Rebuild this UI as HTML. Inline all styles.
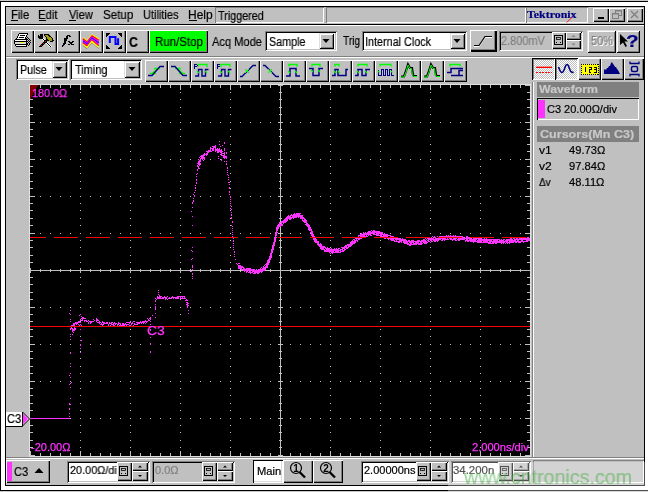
<!DOCTYPE html>
<html><head><meta charset="utf-8"><style>
html,body{margin:0;padding:0;width:648px;height:492px;overflow:hidden;background:#fff;position:relative}
div{box-sizing:border-box}
.t{position:absolute;font-family:"Liberation Sans", sans-serif;white-space:nowrap;line-height:1;will-change:transform;-webkit-text-stroke-width:0.2px}
.r{position:absolute;box-shadow:inset 1px 1px #fff,inset -1px -1px #000,inset -2px -2px #808080}
.r2{position:absolute;box-shadow:inset 1px 1px #dfdfdf,inset -1px -1px #000,inset 2px 2px #fff,inset -2px -2px #808080}
.rb{position:absolute;background:#c0c0c0;box-shadow:inset 1px 1px #fff,inset -2px -2px #000,inset -3px -3px #808080}
.s{position:absolute;box-shadow:inset 1px 1px #808080,inset -1px -1px #fff,inset 2px 2px #000,inset -2px -2px #c0c0c0}
.th{position:absolute;box-shadow:inset 1px 1px #808080,inset -1px -1px #fff}
.pd{position:absolute;background-color:#fff;background-image:repeating-conic-gradient(#c0c0c0 0 25%,#fff 0 50%);background-size:2px 2px;box-shadow:inset 1px 1px #000,inset -1px -1px #fff,inset 2px 2px #808080}
svg{display:block}
</style></head><body>
<div style="position:absolute;left:0px;top:0px;width:648px;height:1px;background:#c8c8c8"></div><div style="position:absolute;left:0px;top:1px;width:648px;height:1px;background:#000"></div><div style="position:absolute;left:0px;top:1px;width:1px;height:490px;background:#000"></div><div style="position:absolute;left:0px;top:490px;width:648px;height:1px;background:#000"></div><div style="position:absolute;left:0px;top:491px;width:648px;height:1px;background:#c8c8c8"></div><div style="position:absolute;left:5px;top:6px;width:640px;height:480px;background:#000"></div><div style="position:absolute;left:6px;top:7px;width:638px;height:478px;background:#c0c0c0"></div><div class="t" style="left:11.06px;top:9px;font-size:12px;color:#000;transform:scaleX(0.941);transform-origin:0 0;">File</div><div style="position:absolute;left:11px;top:20px;width:7px;height:1px;background:#000"></div><div class="t" style="left:38.05px;top:9px;font-size:12px;color:#000;transform:scaleX(0.947);transform-origin:0 0;">Edit</div><div style="position:absolute;left:39px;top:20px;width:7px;height:1px;background:#000"></div><div class="t" style="left:69.00px;top:9px;font-size:12px;color:#000;transform:scaleX(0.920);transform-origin:0 0;">View</div><div style="position:absolute;left:69px;top:20px;width:7px;height:1px;background:#000"></div><div class="t" style="left:103.03px;top:9px;font-size:12px;color:#000;transform:scaleX(0.966);transform-origin:0 0;">Setup</div><div class="t" style="left:143.08px;top:9px;font-size:12px;color:#000;transform:scaleX(0.917);transform-origin:0 0;">Utilities</div><div class="t" style="left:188.00px;top:9px;font-size:12px;color:#000;">Help</div><div style="position:absolute;left:189px;top:20px;width:8px;height:1px;background:#000"></div><div class="th" style="left:215px;top:7px;width:109px;height:16px;background:transparent"></div><div class="t" style="left:218.00px;top:10px;font-size:12px;color:#000;transform:scaleX(0.898);transform-origin:0 0;">Triggered</div><div class="th" style="left:326px;top:7px;width:200px;height:16px;background:transparent"></div><div class="th" style="left:526px;top:7px;width:62px;height:16px;background:transparent"></div><div class="t" style="left:527px;top:9px;font-family:'Liberation Serif',serif;font-weight:bold;font-size:11px;color:#000080;transform:scaleX(1.08);transform-origin:0 0;letter-spacing:0px">Tektronix</div><svg style="position:absolute;left:566px;top:17px;" width="8" height="6"><line x1="0.5" y1="5.5" x2="6" y2="0.5" stroke="#ff2020" stroke-width="1"/></svg><div class="r" style="left:593px;top:8px;width:16px;height:14px;background:#c0c0c0"></div><div style="position:absolute;left:598px;top:17px;width:6px;height:2px;background:#000"></div><div class="r" style="left:609px;top:8px;width:16px;height:14px;background:#c0c0c0"></div><svg style="position:absolute;left:609px;top:8px;" width="16" height="14"><rect x="6.5" y="2.5" width="6" height="5" fill="none" stroke="#808080"/><rect x="6.5" y="2.5" width="6" height="1" fill="#808080"/><rect x="3.5" y="5.5" width="6" height="5" fill="#c0c0c0" stroke="#808080"/><rect x="3.5" y="5.5" width="6" height="1" fill="#808080"/></svg><div class="r" style="left:627px;top:8px;width:16px;height:14px;background:#c0c0c0"></div><svg style="position:absolute;left:627px;top:8px;" width="16" height="14"><path d="M4 3 L11 10 M11 3 L4 10" stroke="#808080" stroke-width="1.4"/></svg><div style="position:absolute;left:6px;top:24px;width:638px;height:1px;background:#000"></div><div style="position:absolute;left:6px;top:25px;width:638px;height:1px;background:#fff"></div><div class="r" style="left:11px;top:30px;width:23px;height:23px;background:#c0c0c0"></div><div class="r" style="left:34px;top:30px;width:23px;height:23px;background:#c0c0c0"></div><div class="r" style="left:57px;top:30px;width:23px;height:23px;background:#c0c0c0"></div><div class="r" style="left:80px;top:30px;width:23px;height:23px;background:#c0c0c0"></div><div class="r" style="left:103px;top:30px;width:23px;height:23px;background:#c0c0c0"></div><div class="r" style="left:126px;top:30px;width:23px;height:23px;background:#c0c0c0"></div><svg style="position:absolute;left:11px;top:30px;shape-rendering:crispEdges" width="23" height="23"><path d="M8 3h1v1h-1zM9 3h1v1h-1zM10 3h1v1h-1zM11 3h1v1h-1zM12 3h1v1h-1zM13 3h1v1h-1zM14 3h1v1h-1zM15 3h1v1h-1zM16 3h1v1h-1zM7 4h1v1h-1zM16 4h1v1h-1zM7 5h1v1h-1zM9 5h1v1h-1zM10 5h1v1h-1zM11 5h1v1h-1zM12 5h1v1h-1zM13 5h1v1h-1zM15 5h1v1h-1zM6 6h1v1h-1zM15 6h1v1h-1zM6 7h1v1h-1zM8 7h1v1h-1zM9 7h1v1h-1zM10 7h1v1h-1zM11 7h1v1h-1zM12 7h1v1h-1zM14 7h1v1h-1zM16 7h1v1h-1zM5 8h1v1h-1zM14 8h1v1h-1zM15 8h1v1h-1zM17 8h1v1h-1zM4 9h1v1h-1zM5 9h1v1h-1zM6 9h1v1h-1zM7 9h1v1h-1zM8 9h1v1h-1zM9 9h1v1h-1zM10 9h1v1h-1zM11 9h1v1h-1zM12 9h1v1h-1zM13 9h1v1h-1zM14 9h1v1h-1zM15 9h1v1h-1zM16 9h1v1h-1zM18 9h1v1h-1zM3 10h1v1h-1zM15 10h1v1h-1zM17 10h1v1h-1zM19 10h1v1h-1zM3 11h1v1h-1zM4 11h1v1h-1zM5 11h1v1h-1zM6 11h1v1h-1zM7 11h1v1h-1zM8 11h1v1h-1zM9 11h1v1h-1zM10 11h1v1h-1zM11 11h1v1h-1zM12 11h1v1h-1zM13 11h1v1h-1zM14 11h1v1h-1zM15 11h1v1h-1zM16 11h1v1h-1zM18 11h1v1h-1zM3 12h1v1h-1zM15 12h1v1h-1zM17 12h1v1h-1zM19 12h1v1h-1zM3 13h1v1h-1zM15 13h1v1h-1zM16 13h1v1h-1zM18 13h1v1h-1zM4 14h1v1h-1zM5 14h1v1h-1zM6 14h1v1h-1zM7 14h1v1h-1zM8 14h1v1h-1zM9 14h1v1h-1zM10 14h1v1h-1zM11 14h1v1h-1zM12 14h1v1h-1zM13 14h1v1h-1zM14 14h1v1h-1zM15 14h1v1h-1zM16 14h1v1h-1zM18 14h1v1h-1zM4 15h1v1h-1zM15 15h1v1h-1zM17 15h1v1h-1zM5 16h1v1h-1zM6 16h1v1h-1zM7 16h1v1h-1zM8 16h1v1h-1zM9 16h1v1h-1zM10 16h1v1h-1zM11 16h1v1h-1zM12 16h1v1h-1zM13 16h1v1h-1zM14 16h1v1h-1zM15 16h1v1h-1z" fill="#000"/><path d="M8 4h1v1h-1zM9 4h1v1h-1zM10 4h1v1h-1zM11 4h1v1h-1zM12 4h1v1h-1zM13 4h1v1h-1zM14 4h1v1h-1zM15 4h1v1h-1zM8 5h1v1h-1zM14 5h1v1h-1zM7 6h1v1h-1zM8 6h1v1h-1zM9 6h1v1h-1zM10 6h1v1h-1zM11 6h1v1h-1zM12 6h1v1h-1zM13 6h1v1h-1zM14 6h1v1h-1zM7 7h1v1h-1zM13 7h1v1h-1zM6 8h1v1h-1zM7 8h1v1h-1zM8 8h1v1h-1zM9 8h1v1h-1zM10 8h1v1h-1zM11 8h1v1h-1zM12 8h1v1h-1zM13 8h1v1h-1zM4 10h1v1h-1zM5 10h1v1h-1zM6 10h1v1h-1zM7 10h1v1h-1zM8 10h1v1h-1zM9 10h1v1h-1zM10 10h1v1h-1zM11 10h1v1h-1zM12 10h1v1h-1zM13 10h1v1h-1zM14 10h1v1h-1zM5 15h1v1h-1zM6 15h1v1h-1zM7 15h1v1h-1zM8 15h1v1h-1zM9 15h1v1h-1zM10 15h1v1h-1zM11 15h1v1h-1zM12 15h1v1h-1zM13 15h1v1h-1zM14 15h1v1h-1z" fill="#fff"/><path d="M4 12h1v1h-1zM5 12h1v1h-1zM6 12h1v1h-1zM7 12h1v1h-1zM8 12h1v1h-1zM13 12h1v1h-1zM14 12h1v1h-1zM4 13h1v1h-1zM5 13h1v1h-1zM6 13h1v1h-1zM7 13h1v1h-1zM8 13h1v1h-1zM9 13h1v1h-1zM10 13h1v1h-1zM11 13h1v1h-1zM12 13h1v1h-1zM13 13h1v1h-1zM14 13h1v1h-1z" fill="#dcdcdc"/><path d="M9 12h1v1h-1zM10 12h1v1h-1zM11 12h1v1h-1zM12 12h1v1h-1z" fill="#ffff00"/></svg><svg style="position:absolute;left:34px;top:30px;shape-rendering:crispEdges" width="23" height="23"><path d="M6 4h1v1h-1zM7 4h1v1h-1zM8 4h1v1h-1zM4 5h1v1h-1zM6 5h1v1h-1zM7 5h1v1h-1zM8 5h1v1h-1zM4 6h1v1h-1zM5 6h1v1h-1zM6 6h1v1h-1zM7 6h1v1h-1zM8 6h1v1h-1zM4 7h1v1h-1zM5 7h1v1h-1zM6 7h1v1h-1zM7 7h1v1h-1zM8 7h1v1h-1zM5 8h1v1h-1zM6 8h1v1h-1zM7 8h1v1h-1zM8 8h1v1h-1zM9 9h1v1h-1zM10 10h1v1h-1zM11 10h1v1h-1zM10 11h1v1h-1zM12 11h1v1h-1zM11 12h1v1h-1zM12 12h1v1h-1zM13 13h1v1h-1zM14 14h1v1h-1zM15 15h1v1h-1zM16 16h1v1h-1zM12 9h1v1h-1zM13 9h1v1h-1zM12 10h1v1h-1zM13 10h1v1h-1zM9 12h1v1h-1zM10 12h1v1h-1zM8 13h1v1h-1zM10 13h1v1h-1zM7 14h1v1h-1zM8 14h1v1h-1zM9 14h1v1h-1zM6 15h1v1h-1zM8 15h1v1h-1zM5 16h1v1h-1zM6 16h1v1h-1zM7 16h1v1h-1zM10 4h1v1h-1zM11 4h1v1h-1zM12 4h1v1h-1zM13 4h1v1h-1zM14 4h1v1h-1zM10 5h1v1h-1zM14 5h1v1h-1zM15 5h1v1h-1zM11 6h1v1h-1zM15 6h1v1h-1zM16 6h1v1h-1zM12 7h1v1h-1zM17 7h1v1h-1zM12 8h1v1h-1zM18 8h1v1h-1zM18 9h1v1h-1zM14 10h1v1h-1zM18 10h1v1h-1zM19 10h1v1h-1zM16 11h1v1h-1zM17 11h1v1h-1zM18 11h1v1h-1z" fill="#000"/><path d="M9 8h1v1h-1zM8 9h1v1h-1zM10 9h1v1h-1zM9 10h1v1h-1zM13 12h1v1h-1zM12 13h1v1h-1zM14 13h1v1h-1zM13 14h1v1h-1zM15 14h1v1h-1zM14 15h1v1h-1zM16 15h1v1h-1zM15 16h1v1h-1zM17 16h1v1h-1z" fill="#fff"/><path d="M11 11h1v1h-1zM9 13h1v1h-1zM7 15h1v1h-1z" fill="#e00000"/><path d="M14 9h1v1h-1zM11 5h1v1h-1zM12 5h1v1h-1zM13 5h1v1h-1zM12 6h1v1h-1zM13 6h1v1h-1zM14 6h1v1h-1zM13 7h1v1h-1zM14 7h1v1h-1zM15 7h1v1h-1zM16 7h1v1h-1zM13 8h1v1h-1zM14 8h1v1h-1zM15 8h1v1h-1zM16 8h1v1h-1zM17 8h1v1h-1zM15 9h1v1h-1zM16 9h1v1h-1zM17 9h1v1h-1zM15 10h1v1h-1zM16 10h1v1h-1zM17 10h1v1h-1z" fill="#a0a000"/></svg><svg style="position:absolute;left:57px;top:30px;shape-rendering:crispEdges" width="23" height="23"><path d="M10 5h1v1h-1zM11 5h1v1h-1zM12 5h1v1h-1zM9 6h1v1h-1zM10 6h1v1h-1zM12 6h1v1h-1zM13 6h1v1h-1zM9 7h1v1h-1zM10 7h1v1h-1zM7 8h1v1h-1zM8 8h1v1h-1zM9 8h1v1h-1zM10 8h1v1h-1zM7 9h1v1h-1zM8 9h1v1h-1zM9 9h1v1h-1zM7 10h1v1h-1zM8 10h1v1h-1zM9 10h1v1h-1zM7 11h1v1h-1zM8 11h1v1h-1zM11 11h1v1h-1zM12 11h1v1h-1zM15 11h1v1h-1zM16 11h1v1h-1zM7 12h1v1h-1zM8 12h1v1h-1zM12 12h1v1h-1zM13 12h1v1h-1zM14 12h1v1h-1zM15 12h1v1h-1zM6 13h1v1h-1zM7 13h1v1h-1zM8 13h1v1h-1zM13 13h1v1h-1zM14 13h1v1h-1zM6 14h1v1h-1zM7 14h1v1h-1zM11 14h1v1h-1zM12 14h1v1h-1zM14 14h1v1h-1zM15 14h1v1h-1zM16 14h1v1h-1zM5 15h1v1h-1zM6 15h1v1h-1zM5 16h1v1h-1z" fill="#000"/></svg><svg style="position:absolute;left:80px;top:30px;" width="23" height="23"><path d="M3 15.5 L7 18.6 L12 12.6 L18.5 18.4" fill="none" stroke="#808080" stroke-width="1"/><path d="M3.00 7.80 L7.00 11.00 L12.00 4.80 L18.80 9.00" fill="none" stroke="#ffff00" stroke-width="1.3"/><path d="M3.00 8.87 L7.00 12.07 L11.97 5.90 L18.77 10.37" fill="none" stroke="#ff0000" stroke-width="1.3"/><path d="M3.00 9.93 L7.00 13.13 L11.93 7.00 L18.73 11.73" fill="none" stroke="#ff00ff" stroke-width="1.3"/><path d="M3.00 11.00 L7.00 14.20 L11.90 8.10 L18.70 13.10" fill="none" stroke="#0000ff" stroke-width="1.3"/><path d="M3.00 12.07 L7.00 15.27 L11.87 9.20 L18.67 14.47" fill="none" stroke="#ff00ff" stroke-width="1.3"/><path d="M3.00 13.13 L7.00 16.33 L11.83 10.30 L18.63 15.83" fill="none" stroke="#ff0000" stroke-width="1.3"/><path d="M3.00 14.20 L7.00 17.40 L11.80 11.40 L18.60 17.20" fill="none" stroke="#ffff00" stroke-width="1.3"/></svg><svg style="position:absolute;left:103px;top:30px;" width="23" height="23">
<path d="M3 3h4v1h-1v1h-1v1h-1v1h-1z M19 3h-4v1h1v1h1v1h1v1h1z M3 19h4v-1h-1v-1h-1v-1h-1v-1h-1z M19 19h-4v-1h1v-1h1v-1h1v-1h1z" fill="#000"/>
<path d="M6.8 13 V7.1 H12.5 V14 H15.1 V8.2" fill="none" stroke="#0000ff" stroke-width="2"/>
</svg><div class="t" style="left:129.12px;top:35px;font-size:14px;color:#000;font-weight:bold;transform:scaleX(0.875);transform-origin:0 0;">C</div><div class="r" style="left:149px;top:30px;width:59px;height:23px;background:#00ff00"></div><div class="t" style="left:155.04px;top:36px;font-size:12px;color:#000;transform:scaleX(0.958);transform-origin:0 0;">Run/Stop</div><div class="t" style="left:212.00px;top:36px;font-size:12px;color:#000;transform:scaleX(0.925);transform-origin:0 0;">Acq Mode</div><div class="s" style="left:265px;top:31px;width:72px;height:20px;background:#fff"></div><div class="r2" style="left:319px;top:33px;width:15px;height:16px;background:#c0c0c0"></div><svg style="position:absolute;left:319px;top:33px;" width="15" height="16"><path d="M3.5 6 h7 l-3.5 4 z" fill="#000"/></svg><div class="t" style="left:269.11px;top:36px;font-size:12px;color:#000;transform:scaleX(0.895);transform-origin:0 0;">Sample</div><div class="t" style="left:343.00px;top:35px;font-size:12px;color:#000;transform:scaleX(0.842);transform-origin:0 0;">Trig</div><div class="s" style="left:362px;top:31px;width:105px;height:20px;background:#fff"></div><div class="r2" style="left:450px;top:33px;width:15px;height:16px;background:#c0c0c0"></div><svg style="position:absolute;left:450px;top:33px;" width="15" height="16"><path d="M3.5 6 h7 l-3.5 4 z" fill="#000"/></svg><div class="t" style="left:365.10px;top:36px;font-size:12px;color:#000;transform:scaleX(0.901);transform-origin:0 0;">Internal Clock</div><div class="rb" style="left:470px;top:30px;width:27px;height:22px"></div><svg style="position:absolute;left:470px;top:30px;" width="27" height="22"><path d="M4 16.5 H9 L15 7.5 H22" fill="none" stroke="#fff" stroke-width="1"/><path d="M4 15.5 H9 L15 6.5 H22" fill="none" stroke="#000" stroke-width="1.2"/></svg><div class="s" style="left:499px;top:31px;width:84px;height:20px;background:#c0c0c0"></div><div class="t" style="left:501.09px;top:35px;font-size:12px;color:#808080;transform:scaleX(0.913);transform-origin:0 0;">2.800mV</div><div class="r" style="left:552px;top:32px;width:14px;height:17px;background:#c0c0c0"></div><svg style="position:absolute;left:552px;top:32px;" width="14" height="17"><rect x="2.5" y="3.5" width="8" height="9" fill="none" stroke="#000"/><rect x="4.5" y="5.5" width="4" height="2" fill="none" stroke="#000" stroke-width="0.8"/><rect x="4" y="10" width="1" height="1" fill="#000"/><rect x="8" y="10" width="1" height="1" fill="#000"/></svg><div class="r" style="left:566px;top:32px;width:15px;height:8px;background:#c0c0c0"></div><div class="r" style="left:566px;top:40px;width:15px;height:9px;background:#c0c0c0"></div><svg style="position:absolute;left:566px;top:32px;" width="15" height="17"><path d="M5.5 5.0 h4 l-2 -2 z M5.5 11.5 h4 l-2 2 z" fill="#808080"/></svg><div class="r2" style="left:587px;top:30px;width:29px;height:23px;background:#c0c0c0"></div><div class="t" style="left:592.09px;top:36px;font-size:12px;color:#fff;transform:scaleX(0.909);transform-origin:0 0;">50%</div><div class="t" style="left:591.09px;top:35px;font-size:12px;color:#808080;transform:scaleX(0.909);transform-origin:0 0;">50%</div><div class="r2" style="left:616px;top:30px;width:24px;height:23px;background:#c0c0c0"></div><svg style="position:absolute;left:616px;top:30px;" width="24" height="23"><path d="M4 4 L4 15 L7 12.5 L9.5 17 L11 16 L8.5 11.5 L12 11.5 Z" fill="#000"/></svg><div class="t" style="left:625.71px;top:34px;font-size:16px;color:#000080;font-weight:bold;transform:scaleX(1.286);transform-origin:0 0;">?</div><div style="position:absolute;left:6px;top:56px;width:638px;height:1px;background:#808080"></div><div style="position:absolute;left:6px;top:57px;width:638px;height:1px;background:#fff"></div><div class="s" style="left:16px;top:59px;width:53px;height:21px;background:#fff"></div><div class="r2" style="left:52px;top:61px;width:15px;height:17px;background:#c0c0c0"></div><svg style="position:absolute;left:52px;top:61px;" width="15" height="17"><path d="M3.5 6 h7 l-3.5 4 z" fill="#000"/></svg><div class="t" style="left:20.11px;top:64px;font-size:12px;color:#000;transform:scaleX(0.893);transform-origin:0 0;">Pulse</div><div class="s" style="left:70px;top:59px;width:72px;height:21px;background:#fff"></div><div class="r2" style="left:124px;top:61px;width:16px;height:17px;background:#c0c0c0"></div><svg style="position:absolute;left:124px;top:61px;" width="16" height="17"><path d="M4.5 6 h7 l-3.5 4 z" fill="#000"/></svg><div class="t" style="left:75.00px;top:64px;font-size:12px;color:#000;transform:scaleX(0.912);transform-origin:0 0;">Timing</div><div class="r" style="left:145px;top:60px;width:23px;height:22px;background:#c0c0c0"></div><svg style="position:absolute;left:145px;top:60px;" width="23" height="22"><path d="M9 8.5 H15 M5 13.5 H11 M13 8.5 L7 13.5" stroke="#00ff00" stroke-width="1.3" fill="none"/><path d="M3 15.5 H7 L15 6.5 H19" stroke="#000080" stroke-width="1.3" fill="none"/></svg><div class="r" style="left:168px;top:60px;width:23px;height:22px;background:#c0c0c0"></div><svg style="position:absolute;left:168px;top:60px;" width="23" height="22"><path d="M7 8.5 H13 M11 13.5 H17 M9 8.5 L15 13.5" stroke="#00ff00" stroke-width="1.3" fill="none"/><path d="M3 6.5 H7 L15 15.5 H19" stroke="#000080" stroke-width="1.3" fill="none"/></svg><div class="r" style="left:191px;top:60px;width:23px;height:22px;background:#c0c0c0"></div><svg style="position:absolute;left:191px;top:60px;" width="23" height="22"><path d="M7 7 V4.5 H16 V7" stroke="#00ff00" stroke-width="1.3" fill="none"/><path d="M4 16 H7.5 V9.5 H11 V16 H14.5 V9.5 H17.5" stroke="#000080" stroke-width="1.4" fill="none"/><path d="M3 4h3v1h-2v1h2v-1h1v1h-1v1h-2v2h-1z" fill="#000080" shape-rendering="crispEdges"/><path d="M6 11 l2 2 M14 11 l2 2" stroke="#00ff00" stroke-width="1.3"/></svg><div class="r" style="left:214px;top:60px;width:23px;height:22px;background:#c0c0c0"></div><svg style="position:absolute;left:214px;top:60px;" width="23" height="22"><path d="M7 7 V4.5 H16 V7" stroke="#00ff00" stroke-width="1.3" fill="none"/><path d="M4 16 H7.5 V9.5 H11 V16 H14.5 V9.5 H17.5" stroke="#000080" stroke-width="1.4" fill="none"/><path d="M3 4h3v1h-2v1h2v1h-2v2h-1z" fill="#000080" shape-rendering="crispEdges"/><path d="M6 11 l2 2 M14 11 l2 2" stroke="#00ff00" stroke-width="1.3"/></svg><div class="r" style="left:237px;top:60px;width:23px;height:22px;background:#c0c0c0"></div><svg style="position:absolute;left:237px;top:60px;" width="23" height="22"><path d="M3 16.5 H5 L16 5.5 H19" stroke="#000080" stroke-width="1.3" fill="none"/><path d="M8 9 L12 13 M12 9 L8 13" stroke="#00ff00" stroke-width="1"/></svg><div class="r" style="left:260px;top:60px;width:23px;height:22px;background:#c0c0c0"></div><svg style="position:absolute;left:260px;top:60px;" width="23" height="22"><path d="M3 5.5 H5 L16 16.5 H19" stroke="#000080" stroke-width="1.3" fill="none"/><path d="M8 9 L12 13 M12 9 L8 13" stroke="#00ff00" stroke-width="1"/></svg><div class="r" style="left:283px;top:60px;width:23px;height:22px;background:#c0c0c0"></div><svg style="position:absolute;left:283px;top:60px;" width="23" height="22"><path d="M6 6.5 V4.5 H14 V6.5" stroke="#00ff00" stroke-width="1.5" fill="none"/><path d="M3 16 H7 V8.5 H13 V16 H17" stroke="#000080" stroke-width="1.5" fill="none"/><path d="M5 11 l2 2 M12 11 l2 2" stroke="#00ff00" stroke-width="1.3"/></svg><div class="r" style="left:306px;top:60px;width:23px;height:22px;background:#c0c0c0"></div><svg style="position:absolute;left:306px;top:60px;" width="23" height="22"><path d="M6 6.5 V4.5 H14 V6.5" stroke="#00ff00" stroke-width="1.5" fill="none"/><path d="M3 8.5 H7 V15.5 H13 V8.5 H17" stroke="#000080" stroke-width="1.5" fill="none"/><path d="M5 10 l2 2 M12 10 l2 2" stroke="#00ff00" stroke-width="1.3"/></svg><div class="r" style="left:329px;top:60px;width:23px;height:22px;background:#c0c0c0"></div><svg style="position:absolute;left:329px;top:60px;" width="23" height="22"><path d="M6 6.5 V4.5 H10 V6.5" stroke="#00ff00" stroke-width="1.5" fill="none"/><path d="M3 15.5 H6 V9.5 H9 V15.5 H17 V9.5 H19" stroke="#000080" stroke-width="1.5" fill="none"/><path d="M5 11 l2 2 M9 11 l2 2" stroke="#00ff00" stroke-width="1.3"/></svg><div class="r" style="left:352px;top:60px;width:23px;height:22px;background:#c0c0c0"></div><svg style="position:absolute;left:352px;top:60px;" width="23" height="22"><path d="M6 6.5 V4.5 H15 V6.5" stroke="#00ff00" stroke-width="1.5" fill="none"/><path d="M3 15.5 H6 V9.5 H10 V15.5 H14 V9.5 H18" stroke="#000080" stroke-width="1.5" fill="none"/><path d="M5 11 l2 2 M13 11 l2 2" stroke="#00ff00" stroke-width="1.3"/></svg><div class="r" style="left:375px;top:60px;width:23px;height:22px;background:#c0c0c0"></div><svg style="position:absolute;left:375px;top:60px;" width="23" height="22"><path d="M5 6.5 V4.5 H16 V6.5" stroke="#00ff00" stroke-width="1.3" fill="none"/><path d="M3.5 9.5 V15.5 H6.5 V9.5 H8.5 V15.5 H10.5 V9.5 H12.5 V15.5 H14.5 V9.5 H16.5 V15.5 H19" stroke="#000080" stroke-width="1" fill="none" shape-rendering="crispEdges"/><path d="M3 11 l1.5 1.5 M16 11 l1.5 1.5" stroke="#00ff00" stroke-width="1.2"/></svg><div class="r" style="left:398px;top:60px;width:23px;height:22px;background:#c0c0c0"></div><svg style="position:absolute;left:398px;top:60px;" width="23" height="22"><path d="M3 16.5 H6 L8 11 L10 4.5 L12 8 H14 L15 15 L16 16 H19" stroke="#000" stroke-width="2.2" fill="none"/><path d="M3 17 H6 L8 12 L10 5 L12 8.5 H13.5 L14.5 15.5 L16 16.5 H19" stroke="#00ff00" stroke-width="1" fill="none"/></svg><div class="r" style="left:421px;top:60px;width:23px;height:22px;background:#c0c0c0"></div><svg style="position:absolute;left:421px;top:60px;" width="23" height="22"><path d="M3 16.5 H6 L8 11 L10 4.5 L12 8 H14 L15 15 L16 16 H19" stroke="#000" stroke-width="2.2" fill="none"/><path d="M3 17 H6 L8 12 L10 5 L12 8.5 H13.5 L14.5 15.5 L16 16.5 H19" stroke="#00ff00" stroke-width="1" fill="none"/></svg><div class="r" style="left:444px;top:60px;width:23px;height:22px;background:#c0c0c0"></div><svg style="position:absolute;left:444px;top:60px;" width="23" height="22"><path d="M6 6.5 V4.5 H16 V6.5" stroke="#00ff00" stroke-width="1.5" fill="none"/><path d="M3 12.5 H7 V8.5 H19 M7 15.5 H19 M15 15.5 V10.5 H19" stroke="#000080" stroke-width="1.5" fill="none"/></svg><div class="pd" style="left:532px;top:58px;width:23px;height:22px"></div><div class="pd" style="left:555px;top:58px;width:23px;height:22px"></div><svg style="position:absolute;left:532px;top:58px;shape-rendering:crispEdges" width="23" height="22"><rect x="4" y="9" width="16" height="1" fill="#ff0000"/><rect x="4" y="8" width="16" height="1" fill="#ff0000" opacity="0.35"/><path d="M4 14.5 H20" stroke="#ff0000" stroke-width="1" stroke-dasharray="2 1"/></svg><svg style="position:absolute;left:555px;top:58px;" width="23" height="22"><path d="M3.5 9 Q5.5 14.5 7 14.5 Q8.5 14.5 10.5 8 Q12 5 13.5 8 Q15.5 14.5 17.5 14.5 L18.5 14" fill="none" stroke="#000080" stroke-width="1.6"/></svg><div class="r" style="left:578px;top:58px;width:23px;height:22px;background:#c0c0c0"></div><svg style="position:absolute;left:578px;top:58px;shape-rendering:crispEdges" width="23" height="22"><rect x="3" y="6" width="18" height="11" fill="#ffff00"/><path d="M3 6.5 H21 M3 16.5 H21" stroke="#000" stroke-width="1" stroke-dasharray="1 1"/><path d="M3.5 6 V17 M20.5 6 V17" stroke="#000" stroke-width="1" stroke-dasharray="1 1"/><path d="M7.5 9 V14 M11 9 h2 v2 h-2 v3 h2 M16 9 h2 v5 h-2 M16 11.5 h2" fill="none" stroke="#000" stroke-width="1"/></svg><div class="r" style="left:601px;top:58px;width:23px;height:22px;background:#c0c0c0"></div><svg style="position:absolute;left:601px;top:58px;" width="23" height="22"><path d="M3 16 V12 L4 11 L5 12 L6 10 L7 10 L8 8 L9 8 L10 5 L11 4 L12 6 L13 7 L14 9 L15 9 L16 11 L17 12 L18 14 L19 16 Z" fill="#000080"/></svg><div class="r" style="left:624px;top:58px;width:20px;height:22px;background:#c0c0c0"></div><svg style="position:absolute;left:624px;top:58px;" width="20" height="22"><path d="M6 3.5 V5.5 H15 V3.5 M6 18.5 V16.5 H15 V18.5" stroke="#000080" stroke-width="1.3" fill="none"/><rect x="7.5" y="8.5" width="6" height="5" rx="1.5" fill="none" stroke="#000080" stroke-width="1.5"/></svg><div style="position:absolute;left:29px;top:84px;width:502px;height:373px;background:#e0e0e0"></div><svg style="position:absolute;left:30px;top:85px" width="500" height="371" shape-rendering="crispEdges"><rect width="500" height="371" fill="#000"/><path d="M50 0h1v1h-1zM50 7h1v1h-1zM50 14h1v1h-1zM50 22h1v1h-1zM50 29h1v1h-1zM50 37h1v1h-1zM50 44h1v1h-1zM50 51h1v1h-1zM50 59h1v1h-1zM50 66h1v1h-1zM50 74h1v1h-1zM50 81h1v1h-1zM50 88h1v1h-1zM50 96h1v1h-1zM50 103h1v1h-1zM50 111h1v1h-1zM50 118h1v1h-1zM50 125h1v1h-1zM50 133h1v1h-1zM50 140h1v1h-1zM50 148h1v1h-1zM50 155h1v1h-1zM50 162h1v1h-1zM50 170h1v1h-1zM50 177h1v1h-1zM50 185h1v1h-1zM50 192h1v1h-1zM50 199h1v1h-1zM50 207h1v1h-1zM50 214h1v1h-1zM50 222h1v1h-1zM50 229h1v1h-1zM50 236h1v1h-1zM50 244h1v1h-1zM50 251h1v1h-1zM50 259h1v1h-1zM50 266h1v1h-1zM50 273h1v1h-1zM50 281h1v1h-1zM50 288h1v1h-1zM50 296h1v1h-1zM50 303h1v1h-1zM50 310h1v1h-1zM50 318h1v1h-1zM50 325h1v1h-1zM50 333h1v1h-1zM50 340h1v1h-1zM50 347h1v1h-1zM50 355h1v1h-1zM50 362h1v1h-1zM50 370h1v1h-1zM100 0h1v1h-1zM100 7h1v1h-1zM100 14h1v1h-1zM100 22h1v1h-1zM100 29h1v1h-1zM100 37h1v1h-1zM100 44h1v1h-1zM100 51h1v1h-1zM100 59h1v1h-1zM100 66h1v1h-1zM100 74h1v1h-1zM100 81h1v1h-1zM100 88h1v1h-1zM100 96h1v1h-1zM100 103h1v1h-1zM100 111h1v1h-1zM100 118h1v1h-1zM100 125h1v1h-1zM100 133h1v1h-1zM100 140h1v1h-1zM100 148h1v1h-1zM100 155h1v1h-1zM100 162h1v1h-1zM100 170h1v1h-1zM100 177h1v1h-1zM100 185h1v1h-1zM100 192h1v1h-1zM100 199h1v1h-1zM100 207h1v1h-1zM100 214h1v1h-1zM100 222h1v1h-1zM100 229h1v1h-1zM100 236h1v1h-1zM100 244h1v1h-1zM100 251h1v1h-1zM100 259h1v1h-1zM100 266h1v1h-1zM100 273h1v1h-1zM100 281h1v1h-1zM100 288h1v1h-1zM100 296h1v1h-1zM100 303h1v1h-1zM100 310h1v1h-1zM100 318h1v1h-1zM100 325h1v1h-1zM100 333h1v1h-1zM100 340h1v1h-1zM100 347h1v1h-1zM100 355h1v1h-1zM100 362h1v1h-1zM100 370h1v1h-1zM150 0h1v1h-1zM150 7h1v1h-1zM150 14h1v1h-1zM150 22h1v1h-1zM150 29h1v1h-1zM150 37h1v1h-1zM150 44h1v1h-1zM150 51h1v1h-1zM150 59h1v1h-1zM150 66h1v1h-1zM150 74h1v1h-1zM150 81h1v1h-1zM150 88h1v1h-1zM150 96h1v1h-1zM150 103h1v1h-1zM150 111h1v1h-1zM150 118h1v1h-1zM150 125h1v1h-1zM150 133h1v1h-1zM150 140h1v1h-1zM150 148h1v1h-1zM150 155h1v1h-1zM150 162h1v1h-1zM150 170h1v1h-1zM150 177h1v1h-1zM150 185h1v1h-1zM150 192h1v1h-1zM150 199h1v1h-1zM150 207h1v1h-1zM150 214h1v1h-1zM150 222h1v1h-1zM150 229h1v1h-1zM150 236h1v1h-1zM150 244h1v1h-1zM150 251h1v1h-1zM150 259h1v1h-1zM150 266h1v1h-1zM150 273h1v1h-1zM150 281h1v1h-1zM150 288h1v1h-1zM150 296h1v1h-1zM150 303h1v1h-1zM150 310h1v1h-1zM150 318h1v1h-1zM150 325h1v1h-1zM150 333h1v1h-1zM150 340h1v1h-1zM150 347h1v1h-1zM150 355h1v1h-1zM150 362h1v1h-1zM150 370h1v1h-1zM200 0h1v1h-1zM200 7h1v1h-1zM200 14h1v1h-1zM200 22h1v1h-1zM200 29h1v1h-1zM200 37h1v1h-1zM200 44h1v1h-1zM200 51h1v1h-1zM200 59h1v1h-1zM200 66h1v1h-1zM200 74h1v1h-1zM200 81h1v1h-1zM200 88h1v1h-1zM200 96h1v1h-1zM200 103h1v1h-1zM200 111h1v1h-1zM200 118h1v1h-1zM200 125h1v1h-1zM200 133h1v1h-1zM200 140h1v1h-1zM200 148h1v1h-1zM200 155h1v1h-1zM200 162h1v1h-1zM200 170h1v1h-1zM200 177h1v1h-1zM200 185h1v1h-1zM200 192h1v1h-1zM200 199h1v1h-1zM200 207h1v1h-1zM200 214h1v1h-1zM200 222h1v1h-1zM200 229h1v1h-1zM200 236h1v1h-1zM200 244h1v1h-1zM200 251h1v1h-1zM200 259h1v1h-1zM200 266h1v1h-1zM200 273h1v1h-1zM200 281h1v1h-1zM200 288h1v1h-1zM200 296h1v1h-1zM200 303h1v1h-1zM200 310h1v1h-1zM200 318h1v1h-1zM200 325h1v1h-1zM200 333h1v1h-1zM200 340h1v1h-1zM200 347h1v1h-1zM200 355h1v1h-1zM200 362h1v1h-1zM200 370h1v1h-1zM300 0h1v1h-1zM300 7h1v1h-1zM300 14h1v1h-1zM300 22h1v1h-1zM300 29h1v1h-1zM300 37h1v1h-1zM300 44h1v1h-1zM300 51h1v1h-1zM300 59h1v1h-1zM300 66h1v1h-1zM300 74h1v1h-1zM300 81h1v1h-1zM300 88h1v1h-1zM300 96h1v1h-1zM300 103h1v1h-1zM300 111h1v1h-1zM300 118h1v1h-1zM300 125h1v1h-1zM300 133h1v1h-1zM300 140h1v1h-1zM300 148h1v1h-1zM300 155h1v1h-1zM300 162h1v1h-1zM300 170h1v1h-1zM300 177h1v1h-1zM300 185h1v1h-1zM300 192h1v1h-1zM300 199h1v1h-1zM300 207h1v1h-1zM300 214h1v1h-1zM300 222h1v1h-1zM300 229h1v1h-1zM300 236h1v1h-1zM300 244h1v1h-1zM300 251h1v1h-1zM300 259h1v1h-1zM300 266h1v1h-1zM300 273h1v1h-1zM300 281h1v1h-1zM300 288h1v1h-1zM300 296h1v1h-1zM300 303h1v1h-1zM300 310h1v1h-1zM300 318h1v1h-1zM300 325h1v1h-1zM300 333h1v1h-1zM300 340h1v1h-1zM300 347h1v1h-1zM300 355h1v1h-1zM300 362h1v1h-1zM300 370h1v1h-1zM350 0h1v1h-1zM350 7h1v1h-1zM350 14h1v1h-1zM350 22h1v1h-1zM350 29h1v1h-1zM350 37h1v1h-1zM350 44h1v1h-1zM350 51h1v1h-1zM350 59h1v1h-1zM350 66h1v1h-1zM350 74h1v1h-1zM350 81h1v1h-1zM350 88h1v1h-1zM350 96h1v1h-1zM350 103h1v1h-1zM350 111h1v1h-1zM350 118h1v1h-1zM350 125h1v1h-1zM350 133h1v1h-1zM350 140h1v1h-1zM350 148h1v1h-1zM350 155h1v1h-1zM350 162h1v1h-1zM350 170h1v1h-1zM350 177h1v1h-1zM350 185h1v1h-1zM350 192h1v1h-1zM350 199h1v1h-1zM350 207h1v1h-1zM350 214h1v1h-1zM350 222h1v1h-1zM350 229h1v1h-1zM350 236h1v1h-1zM350 244h1v1h-1zM350 251h1v1h-1zM350 259h1v1h-1zM350 266h1v1h-1zM350 273h1v1h-1zM350 281h1v1h-1zM350 288h1v1h-1zM350 296h1v1h-1zM350 303h1v1h-1zM350 310h1v1h-1zM350 318h1v1h-1zM350 325h1v1h-1zM350 333h1v1h-1zM350 340h1v1h-1zM350 347h1v1h-1zM350 355h1v1h-1zM350 362h1v1h-1zM350 370h1v1h-1zM400 0h1v1h-1zM400 7h1v1h-1zM400 14h1v1h-1zM400 22h1v1h-1zM400 29h1v1h-1zM400 37h1v1h-1zM400 44h1v1h-1zM400 51h1v1h-1zM400 59h1v1h-1zM400 66h1v1h-1zM400 74h1v1h-1zM400 81h1v1h-1zM400 88h1v1h-1zM400 96h1v1h-1zM400 103h1v1h-1zM400 111h1v1h-1zM400 118h1v1h-1zM400 125h1v1h-1zM400 133h1v1h-1zM400 140h1v1h-1zM400 148h1v1h-1zM400 155h1v1h-1zM400 162h1v1h-1zM400 170h1v1h-1zM400 177h1v1h-1zM400 185h1v1h-1zM400 192h1v1h-1zM400 199h1v1h-1zM400 207h1v1h-1zM400 214h1v1h-1zM400 222h1v1h-1zM400 229h1v1h-1zM400 236h1v1h-1zM400 244h1v1h-1zM400 251h1v1h-1zM400 259h1v1h-1zM400 266h1v1h-1zM400 273h1v1h-1zM400 281h1v1h-1zM400 288h1v1h-1zM400 296h1v1h-1zM400 303h1v1h-1zM400 310h1v1h-1zM400 318h1v1h-1zM400 325h1v1h-1zM400 333h1v1h-1zM400 340h1v1h-1zM400 347h1v1h-1zM400 355h1v1h-1zM400 362h1v1h-1zM400 370h1v1h-1zM450 0h1v1h-1zM450 7h1v1h-1zM450 14h1v1h-1zM450 22h1v1h-1zM450 29h1v1h-1zM450 37h1v1h-1zM450 44h1v1h-1zM450 51h1v1h-1zM450 59h1v1h-1zM450 66h1v1h-1zM450 74h1v1h-1zM450 81h1v1h-1zM450 88h1v1h-1zM450 96h1v1h-1zM450 103h1v1h-1zM450 111h1v1h-1zM450 118h1v1h-1zM450 125h1v1h-1zM450 133h1v1h-1zM450 140h1v1h-1zM450 148h1v1h-1zM450 155h1v1h-1zM450 162h1v1h-1zM450 170h1v1h-1zM450 177h1v1h-1zM450 185h1v1h-1zM450 192h1v1h-1zM450 199h1v1h-1zM450 207h1v1h-1zM450 214h1v1h-1zM450 222h1v1h-1zM450 229h1v1h-1zM450 236h1v1h-1zM450 244h1v1h-1zM450 251h1v1h-1zM450 259h1v1h-1zM450 266h1v1h-1zM450 273h1v1h-1zM450 281h1v1h-1zM450 288h1v1h-1zM450 296h1v1h-1zM450 303h1v1h-1zM450 310h1v1h-1zM450 318h1v1h-1zM450 325h1v1h-1zM450 333h1v1h-1zM450 340h1v1h-1zM450 347h1v1h-1zM450 355h1v1h-1zM450 362h1v1h-1zM450 370h1v1h-1zM0 37h1v1h-1zM10 37h1v1h-1zM20 37h1v1h-1zM30 37h1v1h-1zM40 37h1v1h-1zM50 37h1v1h-1zM60 37h1v1h-1zM70 37h1v1h-1zM80 37h1v1h-1zM90 37h1v1h-1zM100 37h1v1h-1zM110 37h1v1h-1zM120 37h1v1h-1zM130 37h1v1h-1zM140 37h1v1h-1zM150 37h1v1h-1zM160 37h1v1h-1zM170 37h1v1h-1zM180 37h1v1h-1zM190 37h1v1h-1zM200 37h1v1h-1zM210 37h1v1h-1zM220 37h1v1h-1zM230 37h1v1h-1zM240 37h1v1h-1zM250 37h1v1h-1zM260 37h1v1h-1zM270 37h1v1h-1zM280 37h1v1h-1zM290 37h1v1h-1zM300 37h1v1h-1zM310 37h1v1h-1zM320 37h1v1h-1zM330 37h1v1h-1zM340 37h1v1h-1zM350 37h1v1h-1zM360 37h1v1h-1zM370 37h1v1h-1zM380 37h1v1h-1zM390 37h1v1h-1zM400 37h1v1h-1zM410 37h1v1h-1zM420 37h1v1h-1zM430 37h1v1h-1zM440 37h1v1h-1zM450 37h1v1h-1zM460 37h1v1h-1zM470 37h1v1h-1zM480 37h1v1h-1zM490 37h1v1h-1zM500 37h1v1h-1zM0 74h1v1h-1zM10 74h1v1h-1zM20 74h1v1h-1zM30 74h1v1h-1zM40 74h1v1h-1zM50 74h1v1h-1zM60 74h1v1h-1zM70 74h1v1h-1zM80 74h1v1h-1zM90 74h1v1h-1zM100 74h1v1h-1zM110 74h1v1h-1zM120 74h1v1h-1zM130 74h1v1h-1zM140 74h1v1h-1zM150 74h1v1h-1zM160 74h1v1h-1zM170 74h1v1h-1zM180 74h1v1h-1zM190 74h1v1h-1zM200 74h1v1h-1zM210 74h1v1h-1zM220 74h1v1h-1zM230 74h1v1h-1zM240 74h1v1h-1zM250 74h1v1h-1zM260 74h1v1h-1zM270 74h1v1h-1zM280 74h1v1h-1zM290 74h1v1h-1zM300 74h1v1h-1zM310 74h1v1h-1zM320 74h1v1h-1zM330 74h1v1h-1zM340 74h1v1h-1zM350 74h1v1h-1zM360 74h1v1h-1zM370 74h1v1h-1zM380 74h1v1h-1zM390 74h1v1h-1zM400 74h1v1h-1zM410 74h1v1h-1zM420 74h1v1h-1zM430 74h1v1h-1zM440 74h1v1h-1zM450 74h1v1h-1zM460 74h1v1h-1zM470 74h1v1h-1zM480 74h1v1h-1zM490 74h1v1h-1zM500 74h1v1h-1zM0 111h1v1h-1zM10 111h1v1h-1zM20 111h1v1h-1zM30 111h1v1h-1zM40 111h1v1h-1zM50 111h1v1h-1zM60 111h1v1h-1zM70 111h1v1h-1zM80 111h1v1h-1zM90 111h1v1h-1zM100 111h1v1h-1zM110 111h1v1h-1zM120 111h1v1h-1zM130 111h1v1h-1zM140 111h1v1h-1zM150 111h1v1h-1zM160 111h1v1h-1zM170 111h1v1h-1zM180 111h1v1h-1zM190 111h1v1h-1zM200 111h1v1h-1zM210 111h1v1h-1zM220 111h1v1h-1zM230 111h1v1h-1zM240 111h1v1h-1zM250 111h1v1h-1zM260 111h1v1h-1zM270 111h1v1h-1zM280 111h1v1h-1zM290 111h1v1h-1zM300 111h1v1h-1zM310 111h1v1h-1zM320 111h1v1h-1zM330 111h1v1h-1zM340 111h1v1h-1zM350 111h1v1h-1zM360 111h1v1h-1zM370 111h1v1h-1zM380 111h1v1h-1zM390 111h1v1h-1zM400 111h1v1h-1zM410 111h1v1h-1zM420 111h1v1h-1zM430 111h1v1h-1zM440 111h1v1h-1zM450 111h1v1h-1zM460 111h1v1h-1zM470 111h1v1h-1zM480 111h1v1h-1zM490 111h1v1h-1zM500 111h1v1h-1zM0 148h1v1h-1zM10 148h1v1h-1zM20 148h1v1h-1zM30 148h1v1h-1zM40 148h1v1h-1zM50 148h1v1h-1zM60 148h1v1h-1zM70 148h1v1h-1zM80 148h1v1h-1zM90 148h1v1h-1zM100 148h1v1h-1zM110 148h1v1h-1zM120 148h1v1h-1zM130 148h1v1h-1zM140 148h1v1h-1zM150 148h1v1h-1zM160 148h1v1h-1zM170 148h1v1h-1zM180 148h1v1h-1zM190 148h1v1h-1zM200 148h1v1h-1zM210 148h1v1h-1zM220 148h1v1h-1zM230 148h1v1h-1zM240 148h1v1h-1zM250 148h1v1h-1zM260 148h1v1h-1zM270 148h1v1h-1zM280 148h1v1h-1zM290 148h1v1h-1zM300 148h1v1h-1zM310 148h1v1h-1zM320 148h1v1h-1zM330 148h1v1h-1zM340 148h1v1h-1zM350 148h1v1h-1zM360 148h1v1h-1zM370 148h1v1h-1zM380 148h1v1h-1zM390 148h1v1h-1zM400 148h1v1h-1zM410 148h1v1h-1zM420 148h1v1h-1zM430 148h1v1h-1zM440 148h1v1h-1zM450 148h1v1h-1zM460 148h1v1h-1zM470 148h1v1h-1zM480 148h1v1h-1zM490 148h1v1h-1zM500 148h1v1h-1zM0 222h1v1h-1zM10 222h1v1h-1zM20 222h1v1h-1zM30 222h1v1h-1zM40 222h1v1h-1zM50 222h1v1h-1zM60 222h1v1h-1zM70 222h1v1h-1zM80 222h1v1h-1zM90 222h1v1h-1zM100 222h1v1h-1zM110 222h1v1h-1zM120 222h1v1h-1zM130 222h1v1h-1zM140 222h1v1h-1zM150 222h1v1h-1zM160 222h1v1h-1zM170 222h1v1h-1zM180 222h1v1h-1zM190 222h1v1h-1zM200 222h1v1h-1zM210 222h1v1h-1zM220 222h1v1h-1zM230 222h1v1h-1zM240 222h1v1h-1zM250 222h1v1h-1zM260 222h1v1h-1zM270 222h1v1h-1zM280 222h1v1h-1zM290 222h1v1h-1zM300 222h1v1h-1zM310 222h1v1h-1zM320 222h1v1h-1zM330 222h1v1h-1zM340 222h1v1h-1zM350 222h1v1h-1zM360 222h1v1h-1zM370 222h1v1h-1zM380 222h1v1h-1zM390 222h1v1h-1zM400 222h1v1h-1zM410 222h1v1h-1zM420 222h1v1h-1zM430 222h1v1h-1zM440 222h1v1h-1zM450 222h1v1h-1zM460 222h1v1h-1zM470 222h1v1h-1zM480 222h1v1h-1zM490 222h1v1h-1zM500 222h1v1h-1zM0 259h1v1h-1zM10 259h1v1h-1zM20 259h1v1h-1zM30 259h1v1h-1zM40 259h1v1h-1zM50 259h1v1h-1zM60 259h1v1h-1zM70 259h1v1h-1zM80 259h1v1h-1zM90 259h1v1h-1zM100 259h1v1h-1zM110 259h1v1h-1zM120 259h1v1h-1zM130 259h1v1h-1zM140 259h1v1h-1zM150 259h1v1h-1zM160 259h1v1h-1zM170 259h1v1h-1zM180 259h1v1h-1zM190 259h1v1h-1zM200 259h1v1h-1zM210 259h1v1h-1zM220 259h1v1h-1zM230 259h1v1h-1zM240 259h1v1h-1zM250 259h1v1h-1zM260 259h1v1h-1zM270 259h1v1h-1zM280 259h1v1h-1zM290 259h1v1h-1zM300 259h1v1h-1zM310 259h1v1h-1zM320 259h1v1h-1zM330 259h1v1h-1zM340 259h1v1h-1zM350 259h1v1h-1zM360 259h1v1h-1zM370 259h1v1h-1zM380 259h1v1h-1zM390 259h1v1h-1zM400 259h1v1h-1zM410 259h1v1h-1zM420 259h1v1h-1zM430 259h1v1h-1zM440 259h1v1h-1zM450 259h1v1h-1zM460 259h1v1h-1zM470 259h1v1h-1zM480 259h1v1h-1zM490 259h1v1h-1zM500 259h1v1h-1zM0 296h1v1h-1zM10 296h1v1h-1zM20 296h1v1h-1zM30 296h1v1h-1zM40 296h1v1h-1zM50 296h1v1h-1zM60 296h1v1h-1zM70 296h1v1h-1zM80 296h1v1h-1zM90 296h1v1h-1zM100 296h1v1h-1zM110 296h1v1h-1zM120 296h1v1h-1zM130 296h1v1h-1zM140 296h1v1h-1zM150 296h1v1h-1zM160 296h1v1h-1zM170 296h1v1h-1zM180 296h1v1h-1zM190 296h1v1h-1zM200 296h1v1h-1zM210 296h1v1h-1zM220 296h1v1h-1zM230 296h1v1h-1zM240 296h1v1h-1zM250 296h1v1h-1zM260 296h1v1h-1zM270 296h1v1h-1zM280 296h1v1h-1zM290 296h1v1h-1zM300 296h1v1h-1zM310 296h1v1h-1zM320 296h1v1h-1zM330 296h1v1h-1zM340 296h1v1h-1zM350 296h1v1h-1zM360 296h1v1h-1zM370 296h1v1h-1zM380 296h1v1h-1zM390 296h1v1h-1zM400 296h1v1h-1zM410 296h1v1h-1zM420 296h1v1h-1zM430 296h1v1h-1zM440 296h1v1h-1zM450 296h1v1h-1zM460 296h1v1h-1zM470 296h1v1h-1zM480 296h1v1h-1zM490 296h1v1h-1zM500 296h1v1h-1zM0 333h1v1h-1zM10 333h1v1h-1zM20 333h1v1h-1zM30 333h1v1h-1zM40 333h1v1h-1zM50 333h1v1h-1zM60 333h1v1h-1zM70 333h1v1h-1zM80 333h1v1h-1zM90 333h1v1h-1zM100 333h1v1h-1zM110 333h1v1h-1zM120 333h1v1h-1zM130 333h1v1h-1zM140 333h1v1h-1zM150 333h1v1h-1zM160 333h1v1h-1zM170 333h1v1h-1zM180 333h1v1h-1zM190 333h1v1h-1zM200 333h1v1h-1zM210 333h1v1h-1zM220 333h1v1h-1zM230 333h1v1h-1zM240 333h1v1h-1zM250 333h1v1h-1zM260 333h1v1h-1zM270 333h1v1h-1zM280 333h1v1h-1zM290 333h1v1h-1zM300 333h1v1h-1zM310 333h1v1h-1zM320 333h1v1h-1zM330 333h1v1h-1zM340 333h1v1h-1zM350 333h1v1h-1zM360 333h1v1h-1zM370 333h1v1h-1zM380 333h1v1h-1zM390 333h1v1h-1zM400 333h1v1h-1zM410 333h1v1h-1zM420 333h1v1h-1zM430 333h1v1h-1zM440 333h1v1h-1zM450 333h1v1h-1zM460 333h1v1h-1zM470 333h1v1h-1zM480 333h1v1h-1zM490 333h1v1h-1zM500 333h1v1h-1z" fill="#c0c0c0"/><rect x="250" y="0" width="1" height="371" fill="#c0c0c0"/><rect x="0" y="185" width="500" height="1" fill="#c0c0c0"/><path d="M0 183h1v5h-1zM0 0h1v5h-1zM0 366h1v5h-1zM10 184h1v3h-1zM10 0h1v3h-1zM10 368h1v3h-1zM20 184h1v3h-1zM20 0h1v3h-1zM20 368h1v3h-1zM30 184h1v3h-1zM30 0h1v3h-1zM30 368h1v3h-1zM40 184h1v3h-1zM40 0h1v3h-1zM40 368h1v3h-1zM50 183h1v5h-1zM50 0h1v5h-1zM50 366h1v5h-1zM60 184h1v3h-1zM60 0h1v3h-1zM60 368h1v3h-1zM70 184h1v3h-1zM70 0h1v3h-1zM70 368h1v3h-1zM80 184h1v3h-1zM80 0h1v3h-1zM80 368h1v3h-1zM90 184h1v3h-1zM90 0h1v3h-1zM90 368h1v3h-1zM100 183h1v5h-1zM100 0h1v5h-1zM100 366h1v5h-1zM110 184h1v3h-1zM110 0h1v3h-1zM110 368h1v3h-1zM120 184h1v3h-1zM120 0h1v3h-1zM120 368h1v3h-1zM130 184h1v3h-1zM130 0h1v3h-1zM130 368h1v3h-1zM140 184h1v3h-1zM140 0h1v3h-1zM140 368h1v3h-1zM150 183h1v5h-1zM150 0h1v5h-1zM150 366h1v5h-1zM160 184h1v3h-1zM160 0h1v3h-1zM160 368h1v3h-1zM170 184h1v3h-1zM170 0h1v3h-1zM170 368h1v3h-1zM180 184h1v3h-1zM180 0h1v3h-1zM180 368h1v3h-1zM190 184h1v3h-1zM190 0h1v3h-1zM190 368h1v3h-1zM200 183h1v5h-1zM200 0h1v5h-1zM200 366h1v5h-1zM210 184h1v3h-1zM210 0h1v3h-1zM210 368h1v3h-1zM220 184h1v3h-1zM220 0h1v3h-1zM220 368h1v3h-1zM230 184h1v3h-1zM230 0h1v3h-1zM230 368h1v3h-1zM240 184h1v3h-1zM240 0h1v3h-1zM240 368h1v3h-1zM250 183h1v5h-1zM250 0h1v5h-1zM250 366h1v5h-1zM260 184h1v3h-1zM260 0h1v3h-1zM260 368h1v3h-1zM270 184h1v3h-1zM270 0h1v3h-1zM270 368h1v3h-1zM280 184h1v3h-1zM280 0h1v3h-1zM280 368h1v3h-1zM290 184h1v3h-1zM290 0h1v3h-1zM290 368h1v3h-1zM300 183h1v5h-1zM300 0h1v5h-1zM300 366h1v5h-1zM310 184h1v3h-1zM310 0h1v3h-1zM310 368h1v3h-1zM320 184h1v3h-1zM320 0h1v3h-1zM320 368h1v3h-1zM330 184h1v3h-1zM330 0h1v3h-1zM330 368h1v3h-1zM340 184h1v3h-1zM340 0h1v3h-1zM340 368h1v3h-1zM350 183h1v5h-1zM350 0h1v5h-1zM350 366h1v5h-1zM360 184h1v3h-1zM360 0h1v3h-1zM360 368h1v3h-1zM370 184h1v3h-1zM370 0h1v3h-1zM370 368h1v3h-1zM380 184h1v3h-1zM380 0h1v3h-1zM380 368h1v3h-1zM390 184h1v3h-1zM390 0h1v3h-1zM390 368h1v3h-1zM400 183h1v5h-1zM400 0h1v5h-1zM400 366h1v5h-1zM410 184h1v3h-1zM410 0h1v3h-1zM410 368h1v3h-1zM420 184h1v3h-1zM420 0h1v3h-1zM420 368h1v3h-1zM430 184h1v3h-1zM430 0h1v3h-1zM430 368h1v3h-1zM440 184h1v3h-1zM440 0h1v3h-1zM440 368h1v3h-1zM450 183h1v5h-1zM450 0h1v5h-1zM450 366h1v5h-1zM460 184h1v3h-1zM460 0h1v3h-1zM460 368h1v3h-1zM470 184h1v3h-1zM470 0h1v3h-1zM470 368h1v3h-1zM480 184h1v3h-1zM480 0h1v3h-1zM480 368h1v3h-1zM490 184h1v3h-1zM490 0h1v3h-1zM490 368h1v3h-1zM500 183h1v5h-1zM500 0h1v5h-1zM500 366h1v5h-1zM248 0h5v1h-5zM0 0h5v1h-5zM495 0h5v1h-5zM249 7h3v1h-3zM0 7h3v1h-3zM497 7h3v1h-3zM249 14h3v1h-3zM0 14h3v1h-3zM497 14h3v1h-3zM249 22h3v1h-3zM0 22h3v1h-3zM497 22h3v1h-3zM249 29h3v1h-3zM0 29h3v1h-3zM497 29h3v1h-3zM248 37h5v1h-5zM0 37h5v1h-5zM495 37h5v1h-5zM249 44h3v1h-3zM0 44h3v1h-3zM497 44h3v1h-3zM249 51h3v1h-3zM0 51h3v1h-3zM497 51h3v1h-3zM249 59h3v1h-3zM0 59h3v1h-3zM497 59h3v1h-3zM249 66h3v1h-3zM0 66h3v1h-3zM497 66h3v1h-3zM248 74h5v1h-5zM0 74h5v1h-5zM495 74h5v1h-5zM249 81h3v1h-3zM0 81h3v1h-3zM497 81h3v1h-3zM249 88h3v1h-3zM0 88h3v1h-3zM497 88h3v1h-3zM249 96h3v1h-3zM0 96h3v1h-3zM497 96h3v1h-3zM249 103h3v1h-3zM0 103h3v1h-3zM497 103h3v1h-3zM248 111h5v1h-5zM0 111h5v1h-5zM495 111h5v1h-5zM249 118h3v1h-3zM0 118h3v1h-3zM497 118h3v1h-3zM249 125h3v1h-3zM0 125h3v1h-3zM497 125h3v1h-3zM249 133h3v1h-3zM0 133h3v1h-3zM497 133h3v1h-3zM249 140h3v1h-3zM0 140h3v1h-3zM497 140h3v1h-3zM248 148h5v1h-5zM0 148h5v1h-5zM495 148h5v1h-5zM249 155h3v1h-3zM0 155h3v1h-3zM497 155h3v1h-3zM249 162h3v1h-3zM0 162h3v1h-3zM497 162h3v1h-3zM249 170h3v1h-3zM0 170h3v1h-3zM497 170h3v1h-3zM249 177h3v1h-3zM0 177h3v1h-3zM497 177h3v1h-3zM248 185h5v1h-5zM0 185h5v1h-5zM495 185h5v1h-5zM249 192h3v1h-3zM0 192h3v1h-3zM497 192h3v1h-3zM249 199h3v1h-3zM0 199h3v1h-3zM497 199h3v1h-3zM249 207h3v1h-3zM0 207h3v1h-3zM497 207h3v1h-3zM249 214h3v1h-3zM0 214h3v1h-3zM497 214h3v1h-3zM248 222h5v1h-5zM0 222h5v1h-5zM495 222h5v1h-5zM249 229h3v1h-3zM0 229h3v1h-3zM497 229h3v1h-3zM249 236h3v1h-3zM0 236h3v1h-3zM497 236h3v1h-3zM249 244h3v1h-3zM0 244h3v1h-3zM497 244h3v1h-3zM249 251h3v1h-3zM0 251h3v1h-3zM497 251h3v1h-3zM248 259h5v1h-5zM0 259h5v1h-5zM495 259h5v1h-5zM249 266h3v1h-3zM0 266h3v1h-3zM497 266h3v1h-3zM249 273h3v1h-3zM0 273h3v1h-3zM497 273h3v1h-3zM249 281h3v1h-3zM0 281h3v1h-3zM497 281h3v1h-3zM249 288h3v1h-3zM0 288h3v1h-3zM497 288h3v1h-3zM248 296h5v1h-5zM0 296h5v1h-5zM495 296h5v1h-5zM249 303h3v1h-3zM0 303h3v1h-3zM497 303h3v1h-3zM249 310h3v1h-3zM0 310h3v1h-3zM497 310h3v1h-3zM249 318h3v1h-3zM0 318h3v1h-3zM497 318h3v1h-3zM249 325h3v1h-3zM0 325h3v1h-3zM497 325h3v1h-3zM248 333h5v1h-5zM0 333h5v1h-5zM495 333h5v1h-5zM249 340h3v1h-3zM0 340h3v1h-3zM497 340h3v1h-3zM249 347h3v1h-3zM0 347h3v1h-3zM497 347h3v1h-3zM249 355h3v1h-3zM0 355h3v1h-3zM497 355h3v1h-3zM249 362h3v1h-3zM0 362h3v1h-3zM497 362h3v1h-3zM248 370h5v1h-5zM0 370h5v1h-5zM495 370h5v1h-5z" fill="#c0c0c0"/><path d="M0 333h1v1h-1zM1 333h1v1h-1zM2 333h1v1h-1zM3 333h1v1h-1zM4 333h1v1h-1zM5 333h1v1h-1zM6 333h1v1h-1zM7 333h1v1h-1zM8 333h1v1h-1zM9 333h1v1h-1zM10 333h1v1h-1zM11 333h1v1h-1zM12 333h1v1h-1zM13 333h1v1h-1zM14 333h1v1h-1zM15 333h1v1h-1zM16 333h1v1h-1zM17 333h1v1h-1zM18 333h1v1h-1zM19 333h1v1h-1zM20 333h1v1h-1zM21 333h1v1h-1zM22 333h1v1h-1zM23 333h1v1h-1zM24 333h1v1h-1zM25 333h1v1h-1zM26 333h1v1h-1zM27 333h1v1h-1zM28 333h1v1h-1zM29 333h1v1h-1zM30 333h1v1h-1zM31 333h1v1h-1zM32 333h1v1h-1zM33 333h1v1h-1zM34 333h1v1h-1zM35 333h1v1h-1zM36 333h1v1h-1zM37 333h1v1h-1zM38 333h1v1h-1zM39 228h1v1h-1zM39 290h1v1h-1zM39 299h1v1h-1zM39 318h1v1h-1zM39 319h1v1h-1zM39 323h1v1h-1zM39 324h1v1h-1zM39 328h1v1h-1zM39 331h1v1h-1zM39 333h1v1h-1zM40 225h1v1h-1zM40 229h1v1h-1zM40 234h1v1h-1zM40 236h1v1h-1zM40 241h1v1h-1zM40 243h1v1h-1zM40 244h1v1h-1zM40 249h1v1h-1zM40 251h1v1h-1zM40 254h1v1h-1zM40 267h1v1h-1zM40 268h1v1h-1zM40 278h1v1h-1zM40 281h1v1h-1zM40 288h1v1h-1zM40 292h1v1h-1zM40 298h1v1h-1zM40 302h1v1h-1zM40 313h1v1h-1zM40 319h1v1h-1zM41 240h1v1h-1zM41 242h1v1h-1zM41 243h1v1h-1zM41 297h1v1h-1zM42 240h1v1h-1zM42 241h1v1h-1zM42 243h1v1h-1zM42 244h1v1h-1zM42 245h1v1h-1zM42 246h1v1h-1zM42 249h1v1h-1zM43 238h1v1h-1zM43 239h1v1h-1zM43 240h1v1h-1zM43 244h1v1h-1zM43 245h1v1h-1zM43 247h1v1h-1zM44 238h1v1h-1zM44 239h1v1h-1zM44 240h1v1h-1zM44 242h1v1h-1zM44 243h1v1h-1zM44 244h1v1h-1zM44 245h1v1h-1zM45 237h1v1h-1zM45 238h1v1h-1zM45 243h1v1h-1zM45 244h1v1h-1zM46 237h1v1h-1zM46 238h1v1h-1zM46 239h1v1h-1zM47 237h1v1h-1zM47 238h1v1h-1zM48 236h1v1h-1zM48 237h1v1h-1zM48 239h1v1h-1zM49 230h1v1h-1zM49 236h1v1h-1zM49 237h1v1h-1zM49 240h1v1h-1zM50 229h1v1h-1zM50 234h1v1h-1zM50 235h1v1h-1zM50 237h1v1h-1zM50 239h1v1h-1zM50 244h1v1h-1zM50 255h1v1h-1zM50 259h1v1h-1zM50 260h1v1h-1zM50 263h1v1h-1zM50 267h1v1h-1zM51 231h1v1h-1zM51 233h1v1h-1zM51 235h1v1h-1zM51 240h1v1h-1zM51 255h1v1h-1zM52 232h1v1h-1zM52 233h1v1h-1zM52 234h1v1h-1zM52 235h1v1h-1zM53 232h1v1h-1zM53 233h1v1h-1zM54 233h1v1h-1zM54 235h1v1h-1zM54 236h1v1h-1zM55 233h1v1h-1zM55 235h1v1h-1zM56 235h1v1h-1zM56 236h1v1h-1zM57 236h1v1h-1zM58 235h1v1h-1zM58 237h1v1h-1zM58 238h1v1h-1zM59 236h1v1h-1zM60 236h1v1h-1zM60 237h1v1h-1zM60 238h1v1h-1zM61 236h1v1h-1zM61 237h1v1h-1zM62 236h1v1h-1zM63 234h1v1h-1zM63 236h1v1h-1zM64 235h1v1h-1zM66 233h1v1h-1zM66 234h1v1h-1zM66 235h1v1h-1zM66 236h1v1h-1zM67 234h1v1h-1zM67 235h1v1h-1zM67 237h1v1h-1zM68 235h1v1h-1zM68 237h1v1h-1zM69 236h1v1h-1zM69 237h1v1h-1zM69 238h1v1h-1zM70 237h1v1h-1zM70 239h1v1h-1zM71 238h1v1h-1zM71 239h1v1h-1zM72 236h1v1h-1zM72 237h1v1h-1zM72 239h1v1h-1zM72 240h1v1h-1zM73 237h1v1h-1zM73 238h1v1h-1zM73 239h1v1h-1zM74 237h1v1h-1zM74 238h1v1h-1zM75 238h1v1h-1zM76 237h1v1h-1zM76 238h1v1h-1zM77 237h1v1h-1zM77 238h1v1h-1zM78 239h1v1h-1zM78 240h1v1h-1zM79 237h1v1h-1zM79 238h1v1h-1zM80 238h1v1h-1zM80 240h1v1h-1zM81 237h1v1h-1zM81 238h1v1h-1zM81 239h1v1h-1zM82 237h1v1h-1zM82 239h1v1h-1zM83 238h1v1h-1zM83 239h1v1h-1zM83 240h1v1h-1zM84 237h1v1h-1zM84 238h1v1h-1zM84 240h1v1h-1zM85 238h1v1h-1zM85 239h1v1h-1zM85 241h1v1h-1zM86 238h1v1h-1zM87 239h1v1h-1zM87 240h1v1h-1zM88 237h1v1h-1zM88 238h1v1h-1zM88 239h1v1h-1zM89 238h1v1h-1zM89 240h1v1h-1zM90 238h1v1h-1zM90 239h1v1h-1zM90 240h1v1h-1zM90 241h1v1h-1zM91 240h1v1h-1zM92 238h1v1h-1zM92 239h1v1h-1zM92 240h1v1h-1zM93 238h1v1h-1zM93 239h1v1h-1zM93 240h1v1h-1zM94 239h1v1h-1zM94 240h1v1h-1zM95 238h1v1h-1zM95 239h1v1h-1zM96 237h1v1h-1zM96 239h1v1h-1zM96 240h1v1h-1zM97 237h1v1h-1zM97 239h1v1h-1zM98 237h1v1h-1zM98 239h1v1h-1zM99 237h1v1h-1zM99 238h1v1h-1zM99 240h1v1h-1zM100 237h1v1h-1zM100 240h1v1h-1zM101 238h1v1h-1zM101 239h1v1h-1zM102 237h1v1h-1zM102 238h1v1h-1zM103 236h1v1h-1zM103 240h1v1h-1zM104 236h1v1h-1zM104 238h1v1h-1zM104 239h1v1h-1zM105 239h1v1h-1zM106 237h1v1h-1zM106 239h1v1h-1zM107 237h1v1h-1zM107 238h1v1h-1zM107 239h1v1h-1zM108 237h1v1h-1zM108 238h1v1h-1zM109 237h1v1h-1zM109 238h1v1h-1zM110 236h1v1h-1zM110 237h1v1h-1zM111 237h1v1h-1zM111 238h1v1h-1zM112 236h1v1h-1zM112 237h1v1h-1zM113 236h1v1h-1zM113 237h1v1h-1zM113 238h1v1h-1zM114 236h1v1h-1zM114 237h1v1h-1zM115 235h1v1h-1zM115 236h1v1h-1zM115 238h1v1h-1zM116 236h1v1h-1zM116 237h1v1h-1zM117 233h1v1h-1zM117 236h1v1h-1zM118 234h1v1h-1zM118 235h1v1h-1zM119 233h1v1h-1zM119 235h1v1h-1zM120 232h1v1h-1zM120 233h1v1h-1zM120 234h1v1h-1zM120 236h1v1h-1zM120 239h1v1h-1zM120 244h1v1h-1zM120 245h1v1h-1zM120 252h1v1h-1zM120 258h1v1h-1zM120 259h1v1h-1zM120 266h1v1h-1zM120 267h1v1h-1zM122 230h1v1h-1zM125 213h1v1h-1zM125 215h1v1h-1zM125 216h1v1h-1zM125 219h1v1h-1zM125 221h1v1h-1zM125 222h1v1h-1zM125 223h1v1h-1zM125 224h1v1h-1zM125 228h1v1h-1zM125 232h1v1h-1zM126 214h1v1h-1zM127 211h1v1h-1zM127 212h1v1h-1zM127 213h1v1h-1zM128 205h1v1h-1zM128 207h1v1h-1zM128 209h1v1h-1zM128 212h1v1h-1zM128 213h1v1h-1zM129 210h1v1h-1zM129 211h1v1h-1zM129 212h1v1h-1zM129 213h1v1h-1zM130 211h1v1h-1zM130 212h1v1h-1zM130 213h1v1h-1zM131 211h1v1h-1zM131 213h1v1h-1zM132 212h1v1h-1zM132 213h1v1h-1zM133 212h1v1h-1zM133 213h1v1h-1zM134 211h1v1h-1zM134 212h1v1h-1zM135 212h1v1h-1zM135 213h1v1h-1zM135 214h1v1h-1zM136 212h1v1h-1zM136 213h1v1h-1zM137 211h1v1h-1zM137 214h1v1h-1zM138 213h1v1h-1zM139 212h1v1h-1zM139 213h1v1h-1zM140 213h1v1h-1zM141 212h1v1h-1zM141 213h1v1h-1zM142 211h1v1h-1zM142 212h1v1h-1zM143 212h1v1h-1zM143 213h1v1h-1zM144 212h1v1h-1zM145 212h1v1h-1zM145 213h1v1h-1zM146 212h1v1h-1zM146 213h1v1h-1zM147 211h1v1h-1zM147 212h1v1h-1zM147 213h1v1h-1zM148 211h1v1h-1zM148 212h1v1h-1zM148 213h1v1h-1zM149 211h1v1h-1zM150 211h1v1h-1zM150 212h1v1h-1zM150 213h1v1h-1zM151 211h1v1h-1zM151 213h1v1h-1zM152 211h1v1h-1zM152 212h1v1h-1zM152 213h1v1h-1zM153 211h1v1h-1zM153 213h1v1h-1zM154 211h1v1h-1zM154 212h1v1h-1zM154 213h1v1h-1zM155 213h1v1h-1zM155 215h1v1h-1zM156 214h1v1h-1zM156 215h1v1h-1zM156 217h1v1h-1zM156 219h1v1h-1zM157 215h1v1h-1zM157 217h1v1h-1zM157 218h1v1h-1zM157 219h1v1h-1zM157 220h1v1h-1zM157 221h1v1h-1zM157 222h1v1h-1zM158 218h1v1h-1zM158 220h1v1h-1zM158 225h1v1h-1zM158 228h1v1h-1zM161 126h1v1h-1zM161 165h1v1h-1zM161 174h1v1h-1zM161 186h1v1h-1zM162 117h1v1h-1zM162 118h1v1h-1zM162 122h1v1h-1zM162 131h1v1h-1zM162 140h1v1h-1zM162 162h1v1h-1zM162 166h1v1h-1zM162 173h1v1h-1zM162 180h1v1h-1zM162 181h1v1h-1zM162 182h1v1h-1zM162 184h1v1h-1zM162 188h1v1h-1zM162 189h1v1h-1zM162 191h1v1h-1zM162 193h1v1h-1zM163 109h1v1h-1zM163 113h1v1h-1zM163 115h1v1h-1zM163 116h1v1h-1zM164 107h1v1h-1zM164 110h1v1h-1zM164 111h1v1h-1zM165 100h1v1h-1zM165 102h1v1h-1zM165 103h1v1h-1zM165 105h1v1h-1zM166 89h1v1h-1zM166 91h1v1h-1zM166 94h1v1h-1zM166 95h1v1h-1zM166 97h1v1h-1zM166 98h1v1h-1zM167 78h1v1h-1zM167 80h1v1h-1zM167 81h1v1h-1zM167 84h1v1h-1zM167 85h1v1h-1zM167 88h1v1h-1zM168 74h1v1h-1zM168 76h1v1h-1zM168 77h1v1h-1zM168 78h1v1h-1zM168 79h1v1h-1zM168 81h1v1h-1zM168 82h1v1h-1zM168 83h1v1h-1zM169 72h1v1h-1zM169 75h1v1h-1zM169 76h1v1h-1zM169 77h1v1h-1zM169 78h1v1h-1zM169 79h1v1h-1zM169 80h1v1h-1zM169 83h1v1h-1zM170 71h1v1h-1zM170 73h1v1h-1zM170 74h1v1h-1zM170 75h1v1h-1zM170 76h1v1h-1zM170 78h1v1h-1zM170 79h1v1h-1zM171 70h1v1h-1zM171 71h1v1h-1zM171 72h1v1h-1zM171 73h1v1h-1zM172 70h1v1h-1zM172 71h1v1h-1zM172 72h1v1h-1zM172 73h1v1h-1zM172 74h1v1h-1zM173 69h1v1h-1zM173 70h1v1h-1zM173 71h1v1h-1zM173 72h1v1h-1zM173 73h1v1h-1zM173 75h1v1h-1zM174 68h1v1h-1zM174 69h1v1h-1zM174 70h1v1h-1zM174 72h1v1h-1zM174 73h1v1h-1zM174 74h1v1h-1zM175 69h1v1h-1zM176 66h1v1h-1zM176 68h1v1h-1zM176 69h1v1h-1zM176 70h1v1h-1zM177 66h1v1h-1zM177 67h1v1h-1zM177 68h1v1h-1zM177 69h1v1h-1zM178 65h1v1h-1zM178 66h1v1h-1zM178 67h1v1h-1zM179 65h1v1h-1zM179 66h1v1h-1zM180 62h1v1h-1zM180 63h1v1h-1zM180 64h1v1h-1zM180 65h1v1h-1zM180 66h1v1h-1zM181 63h1v1h-1zM181 66h1v1h-1zM182 61h1v1h-1zM182 63h1v1h-1zM182 64h1v1h-1zM182 65h1v1h-1zM183 61h1v1h-1zM183 62h1v1h-1zM183 63h1v1h-1zM183 64h1v1h-1zM183 65h1v1h-1zM184 61h1v1h-1zM184 62h1v1h-1zM185 60h1v1h-1zM185 61h1v1h-1zM185 62h1v1h-1zM185 63h1v1h-1zM185 64h1v1h-1zM185 65h1v1h-1zM185 66h1v1h-1zM186 64h1v1h-1zM186 65h1v1h-1zM187 63h1v1h-1zM187 64h1v1h-1zM187 65h1v1h-1zM187 66h1v1h-1zM187 67h1v1h-1zM188 64h1v1h-1zM188 65h1v1h-1zM188 66h1v1h-1zM188 67h1v1h-1zM188 71h1v1h-1zM188 73h1v1h-1zM189 56h1v1h-1zM189 59h1v1h-1zM189 63h1v1h-1zM189 64h1v1h-1zM189 65h1v1h-1zM189 66h1v1h-1zM190 61h1v1h-1zM190 65h1v1h-1zM190 66h1v1h-1zM190 67h1v1h-1zM190 69h1v1h-1zM191 64h1v1h-1zM191 65h1v1h-1zM191 66h1v1h-1zM191 67h1v1h-1zM191 68h1v1h-1zM191 69h1v1h-1zM191 70h1v1h-1zM191 74h1v1h-1zM191 75h1v1h-1zM192 60h1v1h-1zM192 66h1v1h-1zM192 68h1v1h-1zM192 70h1v1h-1zM193 68h1v1h-1zM193 70h1v1h-1zM193 71h1v1h-1zM193 72h1v1h-1zM194 57h1v1h-1zM194 58h1v1h-1zM194 63h1v1h-1zM194 64h1v1h-1zM194 65h1v1h-1zM194 67h1v1h-1zM194 68h1v1h-1zM194 69h1v1h-1zM194 70h1v1h-1zM194 71h1v1h-1zM194 72h1v1h-1zM194 73h1v1h-1zM194 76h1v1h-1zM195 71h1v1h-1zM195 72h1v1h-1zM196 67h1v1h-1zM196 68h1v1h-1zM196 71h1v1h-1zM196 72h1v1h-1zM196 73h1v1h-1zM196 76h1v1h-1zM196 78h1v1h-1zM196 79h1v1h-1zM197 82h1v1h-1zM197 83h1v1h-1zM197 85h1v1h-1zM197 87h1v1h-1zM197 89h1v1h-1zM198 90h1v1h-1zM198 92h1v1h-1zM198 94h1v1h-1zM198 97h1v1h-1zM199 97h1v1h-1zM199 99h1v1h-1zM199 102h1v1h-1zM199 103h1v1h-1zM199 106h1v1h-1zM199 107h1v1h-1zM199 109h1v1h-1zM200 111h1v1h-1zM200 112h1v1h-1zM200 114h1v1h-1zM200 116h1v1h-1zM200 118h1v1h-1zM200 120h1v1h-1zM200 123h1v1h-1zM201 121h1v1h-1zM201 124h1v1h-1zM201 127h1v1h-1zM201 129h1v1h-1zM201 130h1v1h-1zM201 132h1v1h-1zM201 133h1v1h-1zM201 140h1v1h-1zM202 136h1v1h-1zM202 137h1v1h-1zM202 141h1v1h-1zM202 143h1v1h-1zM202 145h1v1h-1zM202 147h1v1h-1zM202 149h1v1h-1zM202 151h1v1h-1zM203 153h1v1h-1zM203 155h1v1h-1zM203 156h1v1h-1zM203 158h1v1h-1zM203 160h1v1h-1zM203 162h1v1h-1zM203 164h1v1h-1zM204 166h1v1h-1zM204 167h1v1h-1zM204 169h1v1h-1zM204 171h1v1h-1zM205 174h1v1h-1zM206 178h1v1h-1zM207 179h1v1h-1zM208 178h1v1h-1zM208 180h1v1h-1zM208 181h1v1h-1zM208 182h1v1h-1zM208 183h1v1h-1zM209 178h1v1h-1zM209 180h1v1h-1zM209 181h1v1h-1zM209 182h1v1h-1zM209 183h1v1h-1zM210 180h1v1h-1zM210 181h1v1h-1zM210 182h1v1h-1zM210 183h1v1h-1zM211 181h1v1h-1zM211 182h1v1h-1zM211 183h1v1h-1zM211 184h1v1h-1zM212 181h1v1h-1zM212 182h1v1h-1zM212 184h1v1h-1zM213 182h1v1h-1zM213 183h1v1h-1zM213 184h1v1h-1zM213 185h1v1h-1zM214 183h1v1h-1zM214 184h1v1h-1zM214 185h1v1h-1zM214 186h1v1h-1zM215 184h1v1h-1zM215 185h1v1h-1zM216 183h1v1h-1zM216 184h1v1h-1zM216 185h1v1h-1zM216 186h1v1h-1zM216 187h1v1h-1zM217 183h1v1h-1zM217 184h1v1h-1zM217 185h1v1h-1zM217 186h1v1h-1zM218 183h1v1h-1zM218 184h1v1h-1zM218 185h1v1h-1zM218 187h1v1h-1zM219 183h1v1h-1zM219 184h1v1h-1zM219 185h1v1h-1zM219 186h1v1h-1zM219 187h1v1h-1zM220 183h1v1h-1zM220 184h1v1h-1zM220 185h1v1h-1zM220 186h1v1h-1zM220 187h1v1h-1zM220 188h1v1h-1zM221 184h1v1h-1zM221 185h1v1h-1zM221 187h1v1h-1zM222 184h1v1h-1zM222 185h1v1h-1zM222 186h1v1h-1zM222 187h1v1h-1zM223 184h1v1h-1zM223 185h1v1h-1zM223 186h1v1h-1zM223 188h1v1h-1zM224 184h1v1h-1zM224 185h1v1h-1zM224 186h1v1h-1zM224 187h1v1h-1zM224 188h1v1h-1zM225 185h1v1h-1zM225 186h1v1h-1zM225 187h1v1h-1zM225 188h1v1h-1zM226 184h1v1h-1zM226 185h1v1h-1zM226 186h1v1h-1zM226 187h1v1h-1zM227 185h1v1h-1zM227 186h1v1h-1zM227 187h1v1h-1zM227 188h1v1h-1zM228 184h1v1h-1zM228 185h1v1h-1zM228 186h1v1h-1zM228 187h1v1h-1zM228 188h1v1h-1zM229 184h1v1h-1zM229 185h1v1h-1zM229 186h1v1h-1zM229 187h1v1h-1zM230 183h1v1h-1zM230 184h1v1h-1zM230 185h1v1h-1zM230 186h1v1h-1zM231 182h1v1h-1zM231 184h1v1h-1zM231 185h1v1h-1zM231 186h1v1h-1zM231 187h1v1h-1zM232 183h1v1h-1zM232 184h1v1h-1zM232 185h1v1h-1zM232 186h1v1h-1zM233 181h1v1h-1zM233 182h1v1h-1zM233 183h1v1h-1zM233 184h1v1h-1zM233 185h1v1h-1zM234 180h1v1h-1zM234 182h1v1h-1zM234 183h1v1h-1zM234 184h1v1h-1zM234 185h1v1h-1zM235 179h1v1h-1zM235 181h1v1h-1zM235 182h1v1h-1zM235 183h1v1h-1zM235 184h1v1h-1zM236 178h1v1h-1zM236 179h1v1h-1zM236 180h1v1h-1zM236 181h1v1h-1zM236 182h1v1h-1zM237 175h1v1h-1zM237 176h1v1h-1zM237 177h1v1h-1zM237 178h1v1h-1zM237 179h1v1h-1zM237 180h1v1h-1zM237 181h1v1h-1zM237 182h1v1h-1zM238 174h1v1h-1zM238 175h1v1h-1zM238 176h1v1h-1zM238 177h1v1h-1zM238 178h1v1h-1zM238 179h1v1h-1zM239 171h1v1h-1zM239 172h1v1h-1zM239 173h1v1h-1zM239 174h1v1h-1zM239 175h1v1h-1zM239 176h1v1h-1zM239 177h1v1h-1zM240 168h1v1h-1zM240 169h1v1h-1zM240 170h1v1h-1zM240 171h1v1h-1zM240 172h1v1h-1zM240 173h1v1h-1zM240 174h1v1h-1zM241 164h1v1h-1zM241 165h1v1h-1zM241 166h1v1h-1zM241 167h1v1h-1zM241 168h1v1h-1zM241 169h1v1h-1zM241 170h1v1h-1zM241 171h1v1h-1zM241 172h1v1h-1zM242 160h1v1h-1zM242 161h1v1h-1zM242 162h1v1h-1zM242 163h1v1h-1zM242 164h1v1h-1zM242 165h1v1h-1zM242 166h1v1h-1zM242 167h1v1h-1zM243 157h1v1h-1zM243 158h1v1h-1zM243 159h1v1h-1zM243 160h1v1h-1zM243 161h1v1h-1zM243 162h1v1h-1zM243 163h1v1h-1zM243 164h1v1h-1zM244 152h1v1h-1zM244 153h1v1h-1zM244 154h1v1h-1zM244 155h1v1h-1zM244 156h1v1h-1zM244 157h1v1h-1zM244 158h1v1h-1zM244 159h1v1h-1zM244 160h1v1h-1zM245 147h1v1h-1zM245 148h1v1h-1zM245 149h1v1h-1zM245 150h1v1h-1zM245 151h1v1h-1zM245 152h1v1h-1zM245 153h1v1h-1zM245 154h1v1h-1zM245 155h1v1h-1zM245 156h1v1h-1zM246 142h1v1h-1zM246 143h1v1h-1zM246 144h1v1h-1zM246 145h1v1h-1zM246 146h1v1h-1zM246 147h1v1h-1zM246 148h1v1h-1zM246 149h1v1h-1zM246 150h1v1h-1zM246 152h1v1h-1zM247 140h1v1h-1zM247 141h1v1h-1zM247 142h1v1h-1zM247 143h1v1h-1zM247 144h1v1h-1zM247 145h1v1h-1zM247 147h1v1h-1zM248 139h1v1h-1zM248 140h1v1h-1zM248 141h1v1h-1zM248 142h1v1h-1zM248 143h1v1h-1zM249 137h1v1h-1zM249 138h1v1h-1zM249 139h1v1h-1zM249 140h1v1h-1zM249 141h1v1h-1zM250 137h1v1h-1zM250 139h1v1h-1zM250 140h1v1h-1zM250 141h1v1h-1zM251 136h1v1h-1zM251 137h1v1h-1zM251 138h1v1h-1zM251 139h1v1h-1zM251 140h1v1h-1zM252 136h1v1h-1zM252 137h1v1h-1zM252 139h1v1h-1zM252 140h1v1h-1zM253 135h1v1h-1zM253 136h1v1h-1zM253 137h1v1h-1zM253 138h1v1h-1zM254 134h1v1h-1zM254 135h1v1h-1zM254 136h1v1h-1zM254 137h1v1h-1zM255 133h1v1h-1zM255 134h1v1h-1zM255 135h1v1h-1zM255 136h1v1h-1zM255 137h1v1h-1zM256 132h1v1h-1zM256 133h1v1h-1zM256 134h1v1h-1zM256 135h1v1h-1zM256 136h1v1h-1zM257 131h1v1h-1zM257 132h1v1h-1zM257 133h1v1h-1zM257 134h1v1h-1zM257 135h1v1h-1zM258 130h1v1h-1zM258 131h1v1h-1zM258 132h1v1h-1zM258 133h1v1h-1zM259 131h1v1h-1zM259 132h1v1h-1zM259 133h1v1h-1zM259 134h1v1h-1zM260 130h1v1h-1zM260 131h1v1h-1zM260 132h1v1h-1zM260 133h1v1h-1zM260 134h1v1h-1zM261 129h1v1h-1zM261 130h1v1h-1zM261 132h1v1h-1zM261 133h1v1h-1zM262 130h1v1h-1zM262 131h1v1h-1zM262 132h1v1h-1zM263 129h1v1h-1zM263 130h1v1h-1zM263 131h1v1h-1zM263 132h1v1h-1zM263 133h1v1h-1zM264 128h1v1h-1zM264 129h1v1h-1zM264 130h1v1h-1zM264 131h1v1h-1zM264 132h1v1h-1zM265 129h1v1h-1zM265 130h1v1h-1zM265 131h1v1h-1zM265 132h1v1h-1zM266 128h1v1h-1zM266 129h1v1h-1zM266 130h1v1h-1zM266 131h1v1h-1zM266 132h1v1h-1zM267 128h1v1h-1zM267 129h1v1h-1zM267 130h1v1h-1zM267 131h1v1h-1zM268 128h1v1h-1zM268 129h1v1h-1zM268 130h1v1h-1zM268 131h1v1h-1zM268 132h1v1h-1zM269 128h1v1h-1zM269 129h1v1h-1zM269 130h1v1h-1zM269 131h1v1h-1zM270 128h1v1h-1zM270 130h1v1h-1zM270 131h1v1h-1zM270 132h1v1h-1zM270 133h1v1h-1zM271 130h1v1h-1zM271 131h1v1h-1zM271 132h1v1h-1zM271 133h1v1h-1zM272 130h1v1h-1zM272 131h1v1h-1zM272 132h1v1h-1zM272 133h1v1h-1zM272 134h1v1h-1zM272 135h1v1h-1zM273 132h1v1h-1zM273 133h1v1h-1zM273 135h1v1h-1zM273 136h1v1h-1zM274 133h1v1h-1zM274 134h1v1h-1zM274 135h1v1h-1zM274 136h1v1h-1zM274 137h1v1h-1zM275 134h1v1h-1zM275 135h1v1h-1zM275 136h1v1h-1zM275 137h1v1h-1zM275 139h1v1h-1zM276 135h1v1h-1zM276 136h1v1h-1zM276 137h1v1h-1zM276 138h1v1h-1zM276 139h1v1h-1zM276 140h1v1h-1zM277 138h1v1h-1zM277 139h1v1h-1zM277 140h1v1h-1zM277 141h1v1h-1zM278 139h1v1h-1zM278 140h1v1h-1zM278 141h1v1h-1zM278 142h1v1h-1zM278 143h1v1h-1zM278 144h1v1h-1zM279 140h1v1h-1zM279 141h1v1h-1zM279 142h1v1h-1zM279 143h1v1h-1zM279 144h1v1h-1zM279 145h1v1h-1zM280 142h1v1h-1zM280 143h1v1h-1zM280 144h1v1h-1zM280 145h1v1h-1zM280 147h1v1h-1zM281 144h1v1h-1zM281 145h1v1h-1zM281 146h1v1h-1zM281 147h1v1h-1zM281 148h1v1h-1zM281 149h1v1h-1zM281 150h1v1h-1zM282 146h1v1h-1zM282 147h1v1h-1zM282 148h1v1h-1zM282 149h1v1h-1zM282 150h1v1h-1zM282 151h1v1h-1zM282 152h1v1h-1zM283 149h1v1h-1zM283 150h1v1h-1zM283 151h1v1h-1zM283 152h1v1h-1zM283 153h1v1h-1zM283 154h1v1h-1zM284 151h1v1h-1zM284 152h1v1h-1zM284 153h1v1h-1zM284 154h1v1h-1zM284 155h1v1h-1zM284 156h1v1h-1zM285 153h1v1h-1zM285 154h1v1h-1zM285 155h1v1h-1zM285 156h1v1h-1zM285 157h1v1h-1zM286 154h1v1h-1zM286 155h1v1h-1zM286 156h1v1h-1zM286 157h1v1h-1zM287 156h1v1h-1zM287 157h1v1h-1zM287 158h1v1h-1zM287 159h1v1h-1zM288 156h1v1h-1zM288 157h1v1h-1zM288 158h1v1h-1zM288 159h1v1h-1zM288 160h1v1h-1zM289 159h1v1h-1zM289 160h1v1h-1zM289 161h1v1h-1zM290 158h1v1h-1zM290 159h1v1h-1zM290 160h1v1h-1zM290 161h1v1h-1zM290 162h1v1h-1zM290 163h1v1h-1zM291 159h1v1h-1zM291 160h1v1h-1zM291 161h1v1h-1zM291 162h1v1h-1zM291 163h1v1h-1zM291 164h1v1h-1zM292 161h1v1h-1zM292 162h1v1h-1zM292 163h1v1h-1zM292 164h1v1h-1zM293 161h1v1h-1zM293 162h1v1h-1zM293 163h1v1h-1zM293 164h1v1h-1zM294 161h1v1h-1zM294 162h1v1h-1zM294 164h1v1h-1zM294 165h1v1h-1zM294 166h1v1h-1zM295 162h1v1h-1zM295 163h1v1h-1zM295 165h1v1h-1zM295 166h1v1h-1zM296 163h1v1h-1zM296 164h1v1h-1zM296 165h1v1h-1zM296 166h1v1h-1zM297 162h1v1h-1zM297 163h1v1h-1zM297 164h1v1h-1zM297 165h1v1h-1zM297 166h1v1h-1zM298 163h1v1h-1zM298 164h1v1h-1zM298 165h1v1h-1zM298 166h1v1h-1zM299 163h1v1h-1zM299 164h1v1h-1zM299 165h1v1h-1zM299 166h1v1h-1zM299 167h1v1h-1zM300 164h1v1h-1zM300 165h1v1h-1zM300 166h1v1h-1zM300 168h1v1h-1zM301 163h1v1h-1zM301 164h1v1h-1zM301 165h1v1h-1zM301 166h1v1h-1zM301 167h1v1h-1zM302 164h1v1h-1zM302 165h1v1h-1zM302 166h1v1h-1zM302 167h1v1h-1zM302 168h1v1h-1zM303 164h1v1h-1zM303 165h1v1h-1zM303 166h1v1h-1zM303 167h1v1h-1zM304 163h1v1h-1zM304 164h1v1h-1zM304 165h1v1h-1zM304 167h1v1h-1zM305 164h1v1h-1zM305 165h1v1h-1zM305 166h1v1h-1zM305 167h1v1h-1zM306 163h1v1h-1zM306 164h1v1h-1zM306 165h1v1h-1zM306 166h1v1h-1zM306 167h1v1h-1zM307 164h1v1h-1zM307 165h1v1h-1zM307 166h1v1h-1zM307 167h1v1h-1zM308 163h1v1h-1zM308 164h1v1h-1zM308 165h1v1h-1zM308 166h1v1h-1zM308 167h1v1h-1zM309 163h1v1h-1zM309 165h1v1h-1zM309 167h1v1h-1zM310 164h1v1h-1zM310 165h1v1h-1zM310 166h1v1h-1zM310 167h1v1h-1zM311 162h1v1h-1zM311 164h1v1h-1zM311 166h1v1h-1zM312 162h1v1h-1zM312 163h1v1h-1zM312 164h1v1h-1zM312 165h1v1h-1zM312 166h1v1h-1zM313 162h1v1h-1zM313 163h1v1h-1zM313 165h1v1h-1zM313 166h1v1h-1zM314 161h1v1h-1zM314 162h1v1h-1zM314 163h1v1h-1zM314 164h1v1h-1zM314 165h1v1h-1zM315 160h1v1h-1zM315 161h1v1h-1zM315 162h1v1h-1zM315 164h1v1h-1zM316 160h1v1h-1zM316 161h1v1h-1zM316 162h1v1h-1zM316 163h1v1h-1zM317 159h1v1h-1zM317 160h1v1h-1zM317 162h1v1h-1zM317 163h1v1h-1zM318 159h1v1h-1zM318 160h1v1h-1zM318 161h1v1h-1zM318 162h1v1h-1zM319 159h1v1h-1zM319 160h1v1h-1zM319 161h1v1h-1zM320 157h1v1h-1zM320 158h1v1h-1zM320 159h1v1h-1zM320 160h1v1h-1zM320 161h1v1h-1zM321 156h1v1h-1zM321 157h1v1h-1zM321 158h1v1h-1zM321 159h1v1h-1zM321 160h1v1h-1zM322 155h1v1h-1zM322 156h1v1h-1zM322 157h1v1h-1zM322 158h1v1h-1zM322 159h1v1h-1zM323 154h1v1h-1zM323 156h1v1h-1zM323 157h1v1h-1zM323 158h1v1h-1zM324 154h1v1h-1zM324 155h1v1h-1zM324 156h1v1h-1zM324 157h1v1h-1zM324 158h1v1h-1zM325 153h1v1h-1zM325 155h1v1h-1zM325 156h1v1h-1zM325 157h1v1h-1zM326 152h1v1h-1zM326 153h1v1h-1zM326 154h1v1h-1zM326 155h1v1h-1zM327 152h1v1h-1zM327 153h1v1h-1zM327 155h1v1h-1zM327 156h1v1h-1zM328 150h1v1h-1zM328 151h1v1h-1zM328 152h1v1h-1zM328 153h1v1h-1zM328 154h1v1h-1zM329 150h1v1h-1zM329 152h1v1h-1zM329 153h1v1h-1zM329 154h1v1h-1zM330 149h1v1h-1zM330 150h1v1h-1zM330 151h1v1h-1zM330 152h1v1h-1zM330 153h1v1h-1zM331 148h1v1h-1zM331 149h1v1h-1zM331 150h1v1h-1zM331 151h1v1h-1zM331 152h1v1h-1zM331 153h1v1h-1zM332 149h1v1h-1zM332 150h1v1h-1zM332 151h1v1h-1zM332 152h1v1h-1zM333 147h1v1h-1zM333 148h1v1h-1zM333 149h1v1h-1zM333 150h1v1h-1zM333 151h1v1h-1zM334 148h1v1h-1zM334 149h1v1h-1zM334 150h1v1h-1zM334 151h1v1h-1zM335 147h1v1h-1zM335 148h1v1h-1zM335 149h1v1h-1zM335 151h1v1h-1zM336 148h1v1h-1zM336 149h1v1h-1zM336 150h1v1h-1zM336 151h1v1h-1zM337 147h1v1h-1zM337 148h1v1h-1zM337 149h1v1h-1zM337 151h1v1h-1zM338 146h1v1h-1zM338 147h1v1h-1zM338 148h1v1h-1zM338 149h1v1h-1zM338 150h1v1h-1zM339 146h1v1h-1zM339 147h1v1h-1zM339 148h1v1h-1zM339 149h1v1h-1zM340 146h1v1h-1zM340 147h1v1h-1zM340 148h1v1h-1zM340 149h1v1h-1zM340 150h1v1h-1zM341 145h1v1h-1zM341 147h1v1h-1zM341 148h1v1h-1zM341 150h1v1h-1zM342 146h1v1h-1zM342 147h1v1h-1zM342 148h1v1h-1zM343 145h1v1h-1zM343 146h1v1h-1zM343 147h1v1h-1zM343 148h1v1h-1zM343 149h1v1h-1zM344 145h1v1h-1zM344 146h1v1h-1zM344 147h1v1h-1zM344 148h1v1h-1zM344 149h1v1h-1zM345 146h1v1h-1zM345 147h1v1h-1zM345 149h1v1h-1zM346 146h1v1h-1zM346 147h1v1h-1zM346 148h1v1h-1zM346 149h1v1h-1zM346 150h1v1h-1zM347 146h1v1h-1zM347 147h1v1h-1zM347 148h1v1h-1zM347 149h1v1h-1zM347 150h1v1h-1zM348 146h1v1h-1zM348 147h1v1h-1zM348 148h1v1h-1zM348 149h1v1h-1zM348 150h1v1h-1zM349 146h1v1h-1zM349 147h1v1h-1zM349 148h1v1h-1zM349 150h1v1h-1zM350 147h1v1h-1zM350 148h1v1h-1zM350 149h1v1h-1zM350 150h1v1h-1zM350 151h1v1h-1zM351 147h1v1h-1zM351 148h1v1h-1zM351 149h1v1h-1zM351 150h1v1h-1zM351 151h1v1h-1zM352 147h1v1h-1zM352 148h1v1h-1zM352 149h1v1h-1zM352 151h1v1h-1zM353 149h1v1h-1zM353 150h1v1h-1zM353 151h1v1h-1zM354 148h1v1h-1zM354 149h1v1h-1zM354 150h1v1h-1zM354 151h1v1h-1zM354 152h1v1h-1zM354 153h1v1h-1zM355 149h1v1h-1zM355 150h1v1h-1zM355 151h1v1h-1zM355 152h1v1h-1zM355 153h1v1h-1zM356 149h1v1h-1zM356 150h1v1h-1zM356 151h1v1h-1zM356 152h1v1h-1zM357 149h1v1h-1zM357 150h1v1h-1zM357 151h1v1h-1zM357 152h1v1h-1zM357 153h1v1h-1zM358 150h1v1h-1zM358 152h1v1h-1zM358 153h1v1h-1zM358 154h1v1h-1zM359 150h1v1h-1zM359 152h1v1h-1zM359 153h1v1h-1zM360 150h1v1h-1zM360 151h1v1h-1zM360 152h1v1h-1zM360 153h1v1h-1zM360 154h1v1h-1zM361 151h1v1h-1zM361 152h1v1h-1zM361 153h1v1h-1zM361 154h1v1h-1zM361 155h1v1h-1zM362 151h1v1h-1zM362 152h1v1h-1zM362 153h1v1h-1zM362 154h1v1h-1zM362 155h1v1h-1zM363 151h1v1h-1zM363 152h1v1h-1zM363 153h1v1h-1zM363 154h1v1h-1zM363 155h1v1h-1zM364 152h1v1h-1zM364 153h1v1h-1zM364 155h1v1h-1zM364 156h1v1h-1zM365 153h1v1h-1zM365 154h1v1h-1zM365 156h1v1h-1zM366 152h1v1h-1zM366 153h1v1h-1zM366 154h1v1h-1zM366 155h1v1h-1zM366 156h1v1h-1zM367 153h1v1h-1zM367 154h1v1h-1zM367 156h1v1h-1zM368 153h1v1h-1zM368 154h1v1h-1zM368 156h1v1h-1zM368 157h1v1h-1zM369 153h1v1h-1zM369 154h1v1h-1zM369 155h1v1h-1zM369 156h1v1h-1zM369 157h1v1h-1zM370 153h1v1h-1zM370 154h1v1h-1zM370 155h1v1h-1zM370 156h1v1h-1zM371 154h1v1h-1zM371 155h1v1h-1zM371 156h1v1h-1zM371 157h1v1h-1zM372 153h1v1h-1zM372 154h1v1h-1zM372 155h1v1h-1zM373 154h1v1h-1zM373 155h1v1h-1zM373 156h1v1h-1zM373 157h1v1h-1zM374 154h1v1h-1zM374 155h1v1h-1zM374 156h1v1h-1zM374 157h1v1h-1zM374 158h1v1h-1zM375 154h1v1h-1zM375 155h1v1h-1zM375 156h1v1h-1zM375 157h1v1h-1zM375 158h1v1h-1zM376 155h1v1h-1zM376 156h1v1h-1zM376 157h1v1h-1zM376 158h1v1h-1zM377 156h1v1h-1zM377 157h1v1h-1zM377 158h1v1h-1zM377 159h1v1h-1zM378 155h1v1h-1zM378 156h1v1h-1zM378 158h1v1h-1zM378 159h1v1h-1zM379 155h1v1h-1zM379 156h1v1h-1zM379 157h1v1h-1zM379 159h1v1h-1zM379 160h1v1h-1zM380 156h1v1h-1zM380 157h1v1h-1zM380 158h1v1h-1zM380 159h1v1h-1zM380 160h1v1h-1zM381 155h1v1h-1zM381 156h1v1h-1zM381 157h1v1h-1zM381 158h1v1h-1zM381 159h1v1h-1zM382 155h1v1h-1zM382 156h1v1h-1zM382 157h1v1h-1zM382 159h1v1h-1zM383 155h1v1h-1zM383 156h1v1h-1zM383 157h1v1h-1zM383 158h1v1h-1zM383 159h1v1h-1zM384 156h1v1h-1zM384 158h1v1h-1zM384 159h1v1h-1zM385 156h1v1h-1zM385 157h1v1h-1zM385 158h1v1h-1zM385 159h1v1h-1zM386 156h1v1h-1zM386 157h1v1h-1zM386 158h1v1h-1zM386 159h1v1h-1zM387 155h1v1h-1zM387 156h1v1h-1zM387 157h1v1h-1zM387 158h1v1h-1zM388 155h1v1h-1zM388 156h1v1h-1zM388 157h1v1h-1zM388 158h1v1h-1zM388 159h1v1h-1zM389 155h1v1h-1zM389 156h1v1h-1zM389 158h1v1h-1zM389 159h1v1h-1zM390 156h1v1h-1zM390 157h1v1h-1zM390 158h1v1h-1zM390 159h1v1h-1zM391 155h1v1h-1zM391 156h1v1h-1zM391 157h1v1h-1zM391 158h1v1h-1zM391 159h1v1h-1zM392 155h1v1h-1zM392 156h1v1h-1zM392 158h1v1h-1zM393 154h1v1h-1zM393 155h1v1h-1zM393 156h1v1h-1zM393 157h1v1h-1zM394 154h1v1h-1zM394 155h1v1h-1zM394 156h1v1h-1zM394 157h1v1h-1zM394 158h1v1h-1zM395 153h1v1h-1zM395 155h1v1h-1zM395 156h1v1h-1zM395 157h1v1h-1zM395 158h1v1h-1zM396 154h1v1h-1zM396 156h1v1h-1zM396 157h1v1h-1zM396 158h1v1h-1zM397 153h1v1h-1zM397 155h1v1h-1zM397 157h1v1h-1zM398 153h1v1h-1zM398 154h1v1h-1zM398 155h1v1h-1zM398 156h1v1h-1zM399 153h1v1h-1zM399 154h1v1h-1zM399 156h1v1h-1zM400 153h1v1h-1zM400 154h1v1h-1zM400 155h1v1h-1zM400 157h1v1h-1zM401 152h1v1h-1zM401 153h1v1h-1zM401 154h1v1h-1zM401 155h1v1h-1zM401 156h1v1h-1zM402 151h1v1h-1zM402 153h1v1h-1zM402 154h1v1h-1zM402 156h1v1h-1zM403 152h1v1h-1zM403 153h1v1h-1zM403 154h1v1h-1zM403 155h1v1h-1zM404 151h1v1h-1zM404 152h1v1h-1zM404 154h1v1h-1zM404 155h1v1h-1zM404 156h1v1h-1zM405 152h1v1h-1zM405 153h1v1h-1zM405 154h1v1h-1zM405 155h1v1h-1zM405 156h1v1h-1zM406 153h1v1h-1zM406 154h1v1h-1zM406 155h1v1h-1zM407 151h1v1h-1zM407 153h1v1h-1zM407 154h1v1h-1zM407 155h1v1h-1zM407 156h1v1h-1zM408 152h1v1h-1zM408 153h1v1h-1zM408 154h1v1h-1zM408 155h1v1h-1zM409 151h1v1h-1zM409 152h1v1h-1zM409 153h1v1h-1zM409 154h1v1h-1zM410 151h1v1h-1zM410 152h1v1h-1zM410 153h1v1h-1zM410 154h1v1h-1zM411 151h1v1h-1zM411 153h1v1h-1zM411 155h1v1h-1zM412 151h1v1h-1zM412 152h1v1h-1zM412 153h1v1h-1zM412 154h1v1h-1zM412 155h1v1h-1zM413 151h1v1h-1zM413 152h1v1h-1zM413 153h1v1h-1zM413 154h1v1h-1zM414 151h1v1h-1zM414 152h1v1h-1zM414 153h1v1h-1zM414 154h1v1h-1zM414 155h1v1h-1zM415 151h1v1h-1zM415 152h1v1h-1zM415 153h1v1h-1zM415 154h1v1h-1zM416 150h1v1h-1zM416 151h1v1h-1zM416 152h1v1h-1zM416 154h1v1h-1zM417 151h1v1h-1zM417 152h1v1h-1zM417 153h1v1h-1zM417 154h1v1h-1zM418 150h1v1h-1zM418 151h1v1h-1zM418 152h1v1h-1zM418 154h1v1h-1zM419 151h1v1h-1zM419 152h1v1h-1zM419 153h1v1h-1zM420 150h1v1h-1zM420 151h1v1h-1zM420 152h1v1h-1zM420 153h1v1h-1zM420 154h1v1h-1zM421 151h1v1h-1zM421 152h1v1h-1zM421 153h1v1h-1zM421 154h1v1h-1zM422 151h1v1h-1zM422 152h1v1h-1zM422 154h1v1h-1zM422 155h1v1h-1zM423 150h1v1h-1zM423 151h1v1h-1zM423 152h1v1h-1zM423 153h1v1h-1zM423 154h1v1h-1zM424 151h1v1h-1zM424 152h1v1h-1zM424 153h1v1h-1zM424 154h1v1h-1zM425 150h1v1h-1zM425 151h1v1h-1zM425 152h1v1h-1zM425 153h1v1h-1zM425 154h1v1h-1zM425 155h1v1h-1zM426 151h1v1h-1zM426 152h1v1h-1zM426 153h1v1h-1zM426 155h1v1h-1zM427 151h1v1h-1zM427 152h1v1h-1zM427 154h1v1h-1zM428 151h1v1h-1zM428 152h1v1h-1zM428 153h1v1h-1zM428 154h1v1h-1zM428 155h1v1h-1zM429 151h1v1h-1zM429 152h1v1h-1zM429 153h1v1h-1zM429 154h1v1h-1zM429 155h1v1h-1zM430 151h1v1h-1zM430 152h1v1h-1zM430 153h1v1h-1zM430 154h1v1h-1zM431 151h1v1h-1zM431 152h1v1h-1zM431 153h1v1h-1zM431 154h1v1h-1zM432 151h1v1h-1zM432 152h1v1h-1zM432 153h1v1h-1zM432 154h1v1h-1zM433 152h1v1h-1zM433 153h1v1h-1zM433 154h1v1h-1zM434 152h1v1h-1zM434 153h1v1h-1zM434 154h1v1h-1zM435 153h1v1h-1zM435 155h1v1h-1zM435 156h1v1h-1zM436 151h1v1h-1zM436 152h1v1h-1zM436 153h1v1h-1zM436 154h1v1h-1zM436 155h1v1h-1zM437 151h1v1h-1zM437 152h1v1h-1zM437 153h1v1h-1zM437 154h1v1h-1zM437 155h1v1h-1zM437 156h1v1h-1zM438 152h1v1h-1zM438 153h1v1h-1zM438 155h1v1h-1zM438 156h1v1h-1zM439 152h1v1h-1zM439 153h1v1h-1zM439 154h1v1h-1zM439 155h1v1h-1zM440 152h1v1h-1zM440 153h1v1h-1zM440 154h1v1h-1zM440 155h1v1h-1zM440 156h1v1h-1zM441 153h1v1h-1zM441 154h1v1h-1zM441 155h1v1h-1zM441 156h1v1h-1zM442 152h1v1h-1zM442 154h1v1h-1zM442 155h1v1h-1zM442 156h1v1h-1zM443 153h1v1h-1zM443 154h1v1h-1zM443 155h1v1h-1zM443 156h1v1h-1zM443 157h1v1h-1zM444 153h1v1h-1zM444 154h1v1h-1zM444 155h1v1h-1zM444 156h1v1h-1zM445 153h1v1h-1zM445 154h1v1h-1zM445 155h1v1h-1zM445 156h1v1h-1zM446 152h1v1h-1zM446 153h1v1h-1zM446 154h1v1h-1zM446 156h1v1h-1zM447 153h1v1h-1zM447 155h1v1h-1zM447 156h1v1h-1zM447 157h1v1h-1zM448 153h1v1h-1zM448 154h1v1h-1zM448 155h1v1h-1zM448 156h1v1h-1zM448 157h1v1h-1zM449 153h1v1h-1zM449 154h1v1h-1zM449 155h1v1h-1zM449 156h1v1h-1zM449 157h1v1h-1zM450 153h1v1h-1zM450 154h1v1h-1zM450 155h1v1h-1zM450 156h1v1h-1zM450 157h1v1h-1zM451 153h1v1h-1zM451 154h1v1h-1zM451 155h1v1h-1zM451 156h1v1h-1zM451 157h1v1h-1zM452 154h1v1h-1zM452 155h1v1h-1zM452 157h1v1h-1zM453 154h1v1h-1zM453 155h1v1h-1zM453 156h1v1h-1zM453 157h1v1h-1zM454 153h1v1h-1zM454 154h1v1h-1zM454 155h1v1h-1zM454 156h1v1h-1zM454 157h1v1h-1zM455 154h1v1h-1zM455 155h1v1h-1zM455 156h1v1h-1zM455 157h1v1h-1zM456 153h1v1h-1zM456 154h1v1h-1zM456 155h1v1h-1zM456 156h1v1h-1zM456 157h1v1h-1zM457 154h1v1h-1zM457 155h1v1h-1zM457 156h1v1h-1zM457 157h1v1h-1zM458 154h1v1h-1zM458 155h1v1h-1zM458 157h1v1h-1zM458 158h1v1h-1zM459 154h1v1h-1zM459 155h1v1h-1zM459 156h1v1h-1zM459 157h1v1h-1zM459 158h1v1h-1zM460 154h1v1h-1zM460 155h1v1h-1zM460 156h1v1h-1zM460 157h1v1h-1zM460 158h1v1h-1zM461 154h1v1h-1zM461 155h1v1h-1zM461 156h1v1h-1zM461 158h1v1h-1zM462 154h1v1h-1zM462 156h1v1h-1zM462 157h1v1h-1zM462 158h1v1h-1zM463 154h1v1h-1zM463 155h1v1h-1zM463 156h1v1h-1zM463 157h1v1h-1zM463 158h1v1h-1zM464 154h1v1h-1zM464 155h1v1h-1zM464 156h1v1h-1zM464 157h1v1h-1zM465 154h1v1h-1zM465 155h1v1h-1zM465 156h1v1h-1zM465 157h1v1h-1zM465 158h1v1h-1zM466 154h1v1h-1zM466 155h1v1h-1zM466 156h1v1h-1zM466 157h1v1h-1zM466 158h1v1h-1zM467 154h1v1h-1zM467 155h1v1h-1zM467 156h1v1h-1zM467 157h1v1h-1zM468 154h1v1h-1zM468 156h1v1h-1zM468 157h1v1h-1zM469 154h1v1h-1zM469 155h1v1h-1zM469 156h1v1h-1zM469 157h1v1h-1zM470 155h1v1h-1zM470 156h1v1h-1zM470 157h1v1h-1zM471 154h1v1h-1zM471 155h1v1h-1zM471 156h1v1h-1zM471 157h1v1h-1zM471 158h1v1h-1zM472 155h1v1h-1zM472 156h1v1h-1zM472 157h1v1h-1zM473 154h1v1h-1zM473 155h1v1h-1zM473 156h1v1h-1zM473 157h1v1h-1zM473 158h1v1h-1zM474 154h1v1h-1zM474 156h1v1h-1zM474 157h1v1h-1zM475 155h1v1h-1zM475 156h1v1h-1zM475 158h1v1h-1zM476 154h1v1h-1zM476 155h1v1h-1zM476 156h1v1h-1zM476 157h1v1h-1zM477 154h1v1h-1zM477 155h1v1h-1zM477 156h1v1h-1zM477 157h1v1h-1zM477 158h1v1h-1zM478 154h1v1h-1zM478 155h1v1h-1zM478 157h1v1h-1zM479 154h1v1h-1zM479 155h1v1h-1zM479 156h1v1h-1zM479 157h1v1h-1zM479 158h1v1h-1zM480 153h1v1h-1zM480 154h1v1h-1zM480 155h1v1h-1zM480 156h1v1h-1zM480 157h1v1h-1zM481 153h1v1h-1zM481 154h1v1h-1zM481 155h1v1h-1zM481 156h1v1h-1zM481 157h1v1h-1zM482 154h1v1h-1zM482 155h1v1h-1zM482 156h1v1h-1zM482 157h1v1h-1zM483 153h1v1h-1zM483 155h1v1h-1zM483 156h1v1h-1zM483 157h1v1h-1zM484 153h1v1h-1zM484 154h1v1h-1zM484 155h1v1h-1zM484 156h1v1h-1zM485 154h1v1h-1zM485 155h1v1h-1zM485 156h1v1h-1zM485 157h1v1h-1zM486 153h1v1h-1zM486 154h1v1h-1zM486 156h1v1h-1zM486 157h1v1h-1zM487 153h1v1h-1zM487 154h1v1h-1zM487 155h1v1h-1zM487 156h1v1h-1zM488 154h1v1h-1zM488 155h1v1h-1zM488 156h1v1h-1zM488 157h1v1h-1zM489 153h1v1h-1zM489 154h1v1h-1zM489 156h1v1h-1zM489 157h1v1h-1zM490 153h1v1h-1zM490 154h1v1h-1zM490 156h1v1h-1zM490 157h1v1h-1zM491 153h1v1h-1zM491 154h1v1h-1zM491 155h1v1h-1zM491 156h1v1h-1zM492 153h1v1h-1zM492 154h1v1h-1zM492 155h1v1h-1zM492 156h1v1h-1zM493 152h1v1h-1zM493 153h1v1h-1zM493 154h1v1h-1zM493 156h1v1h-1zM493 157h1v1h-1zM494 152h1v1h-1zM494 153h1v1h-1zM494 154h1v1h-1zM494 156h1v1h-1zM495 153h1v1h-1zM495 154h1v1h-1zM495 156h1v1h-1zM496 153h1v1h-1zM496 154h1v1h-1zM496 155h1v1h-1zM496 156h1v1h-1zM497 152h1v1h-1zM497 153h1v1h-1zM497 154h1v1h-1zM497 155h1v1h-1zM497 156h1v1h-1zM498 152h1v1h-1zM498 153h1v1h-1zM498 154h1v1h-1zM498 155h1v1h-1zM499 153h1v1h-1zM499 154h1v1h-1zM499 155h1v1h-1z" fill="#ff33ff"/><path d="M0 241h500v1h-500z" fill="#ff0000"/><path d="M0 152h16v1h-16zM24 152h24v1h-24zM56 152h24v1h-24zM88 152h24v1h-24zM120 152h24v1h-24zM152 152h24v1h-24zM184 152h24v1h-24zM216 152h24v1h-24zM248 152h24v1h-24zM280 152h24v1h-24zM312 152h24v1h-24zM344 152h24v1h-24zM376 152h24v1h-24zM408 152h24v1h-24zM440 152h24v1h-24zM472 152h24v1h-24z" fill="#ff0000"/><path d="M0 0H8L0 15z" fill="#800000"/></svg><div class="t" style="left:32.02px;top:88px;font-size:11px;color:#ff33ff;transform:scaleX(0.982);transform-origin:0 0;-webkit-text-stroke:0.25px #ff33ff;">180.0&#937;</div><div class="t" style="left:31.00px;top:442px;font-size:11px;color:#ff33ff;-webkit-text-stroke:0.25px #ff33ff;">-20.00&#937;</div><div class="t" style="left:472.00px;top:442px;font-size:11px;color:#ff33ff;transform:scaleX(1.009);transform-origin:0 0;-webkit-text-stroke:0.25px #ff33ff;">2.000ns/div</div><div class="t" style="left:146.93px;top:324px;font-size:13px;color:#ff33ff;transform:scaleX(1.071);transform-origin:0 0;-webkit-text-stroke:0.25px #ff33ff;">C3</div><svg style="position:absolute;left:6px;top:411px;" width="24" height="16"><path d="M0 1 H16 L23 8 L16 15 H0 Z" fill="#fff"/><path d="M16.5 1 V15.5 H0 M16.5 1 L23.5 8 L16.5 15" fill="none" stroke="#000" stroke-width="1"/><path d="M17 2.5 L22 8 L17 13.5 Z" fill="#ff33ff"/></svg><div class="t" style="left:7.08px;top:413px;font-size:12px;color:#000;transform:scaleX(0.923);transform-origin:0 0;">C3</div><div style="position:absolute;left:532px;top:82px;width:1px;height:375px;background:#808080"></div><div style="position:absolute;left:533px;top:82px;width:1px;height:375px;background:#fff"></div><div style="position:absolute;left:537px;top:82px;width:102px;height:15px;background:#808080"></div><div class="t" style="left:539.00px;top:84px;font-size:11px;color:#c8c8c8;font-weight:bold;transform:scaleX(1.118);transform-origin:0 0;">Waveform</div><div class="th" style="left:537px;top:98px;width:102px;height:22px;background:#c0c0c0"></div><div style="position:absolute;left:537px;top:98px;width:102px;height:22px;box-shadow:inset 1px 1px #000,inset -1px -1px #fff"></div><div style="position:absolute;left:538px;top:100px;width:7px;height:18px;background:#ff33ff"></div><div class="t" style="left:547.00px;top:104px;font-size:11px;color:#000;">C3 20.00&#937;/div</div><div style="position:absolute;left:537px;top:126px;width:102px;height:16px;background:#808080"></div><div class="t" style="left:540.00px;top:129px;font-size:11px;color:#c8c8c8;font-weight:bold;transform:scaleX(1.142);transform-origin:0 0;">Cursors(Mn C3)</div><div class="t" style="left:539.00px;top:145px;font-size:11px;color:#000;transform:scaleX(1.100);transform-origin:0 0;">v1</div><div class="t" style="left:569.00px;top:145px;font-size:11px;color:#000;transform:scaleX(1.015);transform-origin:0 0;">49.73&#937;</div><div class="t" style="left:539.00px;top:161px;font-size:11px;color:#000;transform:scaleX(1.100);transform-origin:0 0;">v2</div><div class="t" style="left:569.00px;top:161px;font-size:11px;color:#000;transform:scaleX(1.015);transform-origin:0 0;">97.84&#937;</div><div class="t" style="left:539.00px;top:177px;font-size:11px;color:#000;transform:scaleX(0.917);transform-origin:0 0;">&#916;v</div><div class="t" style="left:569.00px;top:177px;font-size:11px;color:#000;transform:scaleX(1.015);transform-origin:0 0;">48.11&#937;</div><div style="position:absolute;left:6px;top:457px;width:638px;height:1px;background:#808080"></div><div style="position:absolute;left:6px;top:458px;width:638px;height:1px;background:#fff"></div><div class="r" style="left:6px;top:460px;width:44px;height:23px;background:#c0c0c0"></div><div style="position:absolute;left:7px;top:462px;width:5px;height:19px;background:#ff33ff"></div><div class="t" style="left:14.08px;top:466px;font-size:12px;color:#000;transform:scaleX(0.923);transform-origin:0 0;">C3</div><svg style="position:absolute;left:34px;top:467px;" width="11" height="7"><path d="M0.5 6 L5 1 L9.5 6z" fill="#000"/></svg><div class="s" style="left:67px;top:461px;width:83px;height:22px;background:#fff"></div><div class="t" style="left:70.00px;top:465px;font-size:11px;color:#000;transform:scaleX(0.987);transform-origin:0 0;">20.00&#937;/di</div><div class="r" style="left:117px;top:462px;width:15px;height:19px;background:#c0c0c0"></div><svg style="position:absolute;left:117px;top:462px;" width="15" height="19"><rect x="2.5" y="4.5" width="8" height="9" fill="none" stroke="#000"/><rect x="4.5" y="6.5" width="4" height="2" fill="none" stroke="#000" stroke-width="0.8"/><rect x="4" y="11" width="1" height="1" fill="#000"/><rect x="8" y="11" width="1" height="1" fill="#000"/></svg><div class="r" style="left:132px;top:462px;width:16px;height:9px;background:#c0c0c0"></div><div class="r" style="left:132px;top:471px;width:16px;height:10px;background:#c0c0c0"></div><svg style="position:absolute;left:132px;top:462px;" width="16" height="19"><path d="M6.0 5.5 h4 l-2 -2 z M6.0 13.0 h4 l-2 2 z" fill="#000"/></svg><div class="s" style="left:152px;top:461px;width:83px;height:22px;background:#c0c0c0"></div><div class="t" style="left:155.00px;top:465px;font-size:11px;color:#808080;">0.0&#937;</div><div class="r" style="left:202px;top:462px;width:15px;height:19px;background:#c0c0c0"></div><svg style="position:absolute;left:202px;top:462px;" width="15" height="19"><rect x="2.5" y="4.5" width="8" height="9" fill="none" stroke="#000"/><rect x="4.5" y="6.5" width="4" height="2" fill="none" stroke="#000" stroke-width="0.8"/><rect x="4" y="11" width="1" height="1" fill="#000"/><rect x="8" y="11" width="1" height="1" fill="#000"/></svg><div class="r" style="left:217px;top:462px;width:16px;height:9px;background:#c0c0c0"></div><div class="r" style="left:217px;top:471px;width:16px;height:10px;background:#c0c0c0"></div><svg style="position:absolute;left:217px;top:462px;" width="16" height="19"><path d="M6.0 5.5 h4 l-2 -2 z M6.0 13.0 h4 l-2 2 z" fill="#000"/></svg><div style="position:absolute;left:253px;top:460px;width:30px;height:23px;background:#fff;box-shadow:inset 1px 1px #000,inset -1px -1px #fff,inset -2px -2px #dcdcdc"></div><div class="t" style="left:256.99px;top:466px;font-size:11px;color:#000;transform:scaleX(1.014);transform-origin:0 0;">Main</div><div class="r" style="left:283px;top:460px;width:30px;height:23px;background:#c0c0c0"></div><div class="r" style="left:313px;top:460px;width:30px;height:23px;background:#c0c0c0"></div><svg style="position:absolute;left:283px;top:460px;" width="30" height="23"><circle cx="13" cy="8" r="5.5" fill="none" stroke="#000" stroke-width="1.2"/><path d="M16.5 12 L22 17.5" stroke="#000" stroke-width="2.3"/><text x="13" y="11.8" text-anchor="middle" font-family="Liberation Sans" font-weight="bold" font-size="10" fill="#000">1</text></svg><svg style="position:absolute;left:313px;top:460px;" width="30" height="23"><circle cx="13" cy="8" r="5.5" fill="none" stroke="#000" stroke-width="1.2"/><path d="M16.5 12 L22 17.5" stroke="#000" stroke-width="2.3"/><text x="13" y="11.8" text-anchor="middle" font-family="Liberation Sans" font-weight="bold" font-size="10" fill="#000">2</text></svg><div class="s" style="left:361px;top:461px;width:88px;height:22px;background:#fff"></div><div class="t" style="left:364.00px;top:465px;font-size:11px;color:#000;">2.00000ns</div><div class="r" style="left:416px;top:462px;width:15px;height:19px;background:#c0c0c0"></div><svg style="position:absolute;left:416px;top:462px;" width="15" height="19"><rect x="2.5" y="4.5" width="8" height="9" fill="none" stroke="#000"/><rect x="4.5" y="6.5" width="4" height="2" fill="none" stroke="#000" stroke-width="0.8"/><rect x="4" y="11" width="1" height="1" fill="#000"/><rect x="8" y="11" width="1" height="1" fill="#000"/></svg><div class="r" style="left:431px;top:462px;width:16px;height:9px;background:#c0c0c0"></div><div class="r" style="left:431px;top:471px;width:16px;height:10px;background:#c0c0c0"></div><svg style="position:absolute;left:431px;top:462px;" width="16" height="19"><path d="M6.0 5.5 h4 l-2 -2 z M6.0 13.0 h4 l-2 2 z" fill="#000"/></svg><div class="s" style="left:451px;top:461px;width:80px;height:22px;background:#fff"></div><div class="t" style="left:452.96px;top:465px;font-size:11px;color:#000;transform:scaleX(1.038);transform-origin:0 0;">34.200n</div><div class="r" style="left:498px;top:462px;width:15px;height:19px;background:#c0c0c0"></div><svg style="position:absolute;left:498px;top:462px;" width="15" height="19"><rect x="2.5" y="4.5" width="8" height="9" fill="none" stroke="#000"/><rect x="4.5" y="6.5" width="4" height="2" fill="none" stroke="#000" stroke-width="0.8"/><rect x="4" y="11" width="1" height="1" fill="#000"/><rect x="8" y="11" width="1" height="1" fill="#000"/></svg><div class="r" style="left:513px;top:462px;width:16px;height:9px;background:#c0c0c0"></div><div class="r" style="left:513px;top:471px;width:16px;height:10px;background:#c0c0c0"></div><svg style="position:absolute;left:513px;top:462px;" width="16" height="19"><path d="M6.0 5.5 h4 l-2 -2 z M6.0 13.0 h4 l-2 2 z" fill="#000"/></svg><div class="th" style="left:533px;top:460px;width:111px;height:23px;background:transparent"></div><div style="position:absolute;left:6px;top:483px;width:638px;height:2px;background:#c0c0c0"></div><div style="position:absolute;left:5px;top:485px;width:640px;height:1px;background:#000"></div><div style="position:absolute;left:448px;top:462px;width:200px;height:30px;background:rgba(255,255,255,0.31)"></div><div class="t" style="left:464.00px;top:467px;font-size:20px;color:rgba(60,170,60,0.45);transform:scaleX(0.982);transform-origin:0 0;">www.cntronics.com</div>
</body></html>
